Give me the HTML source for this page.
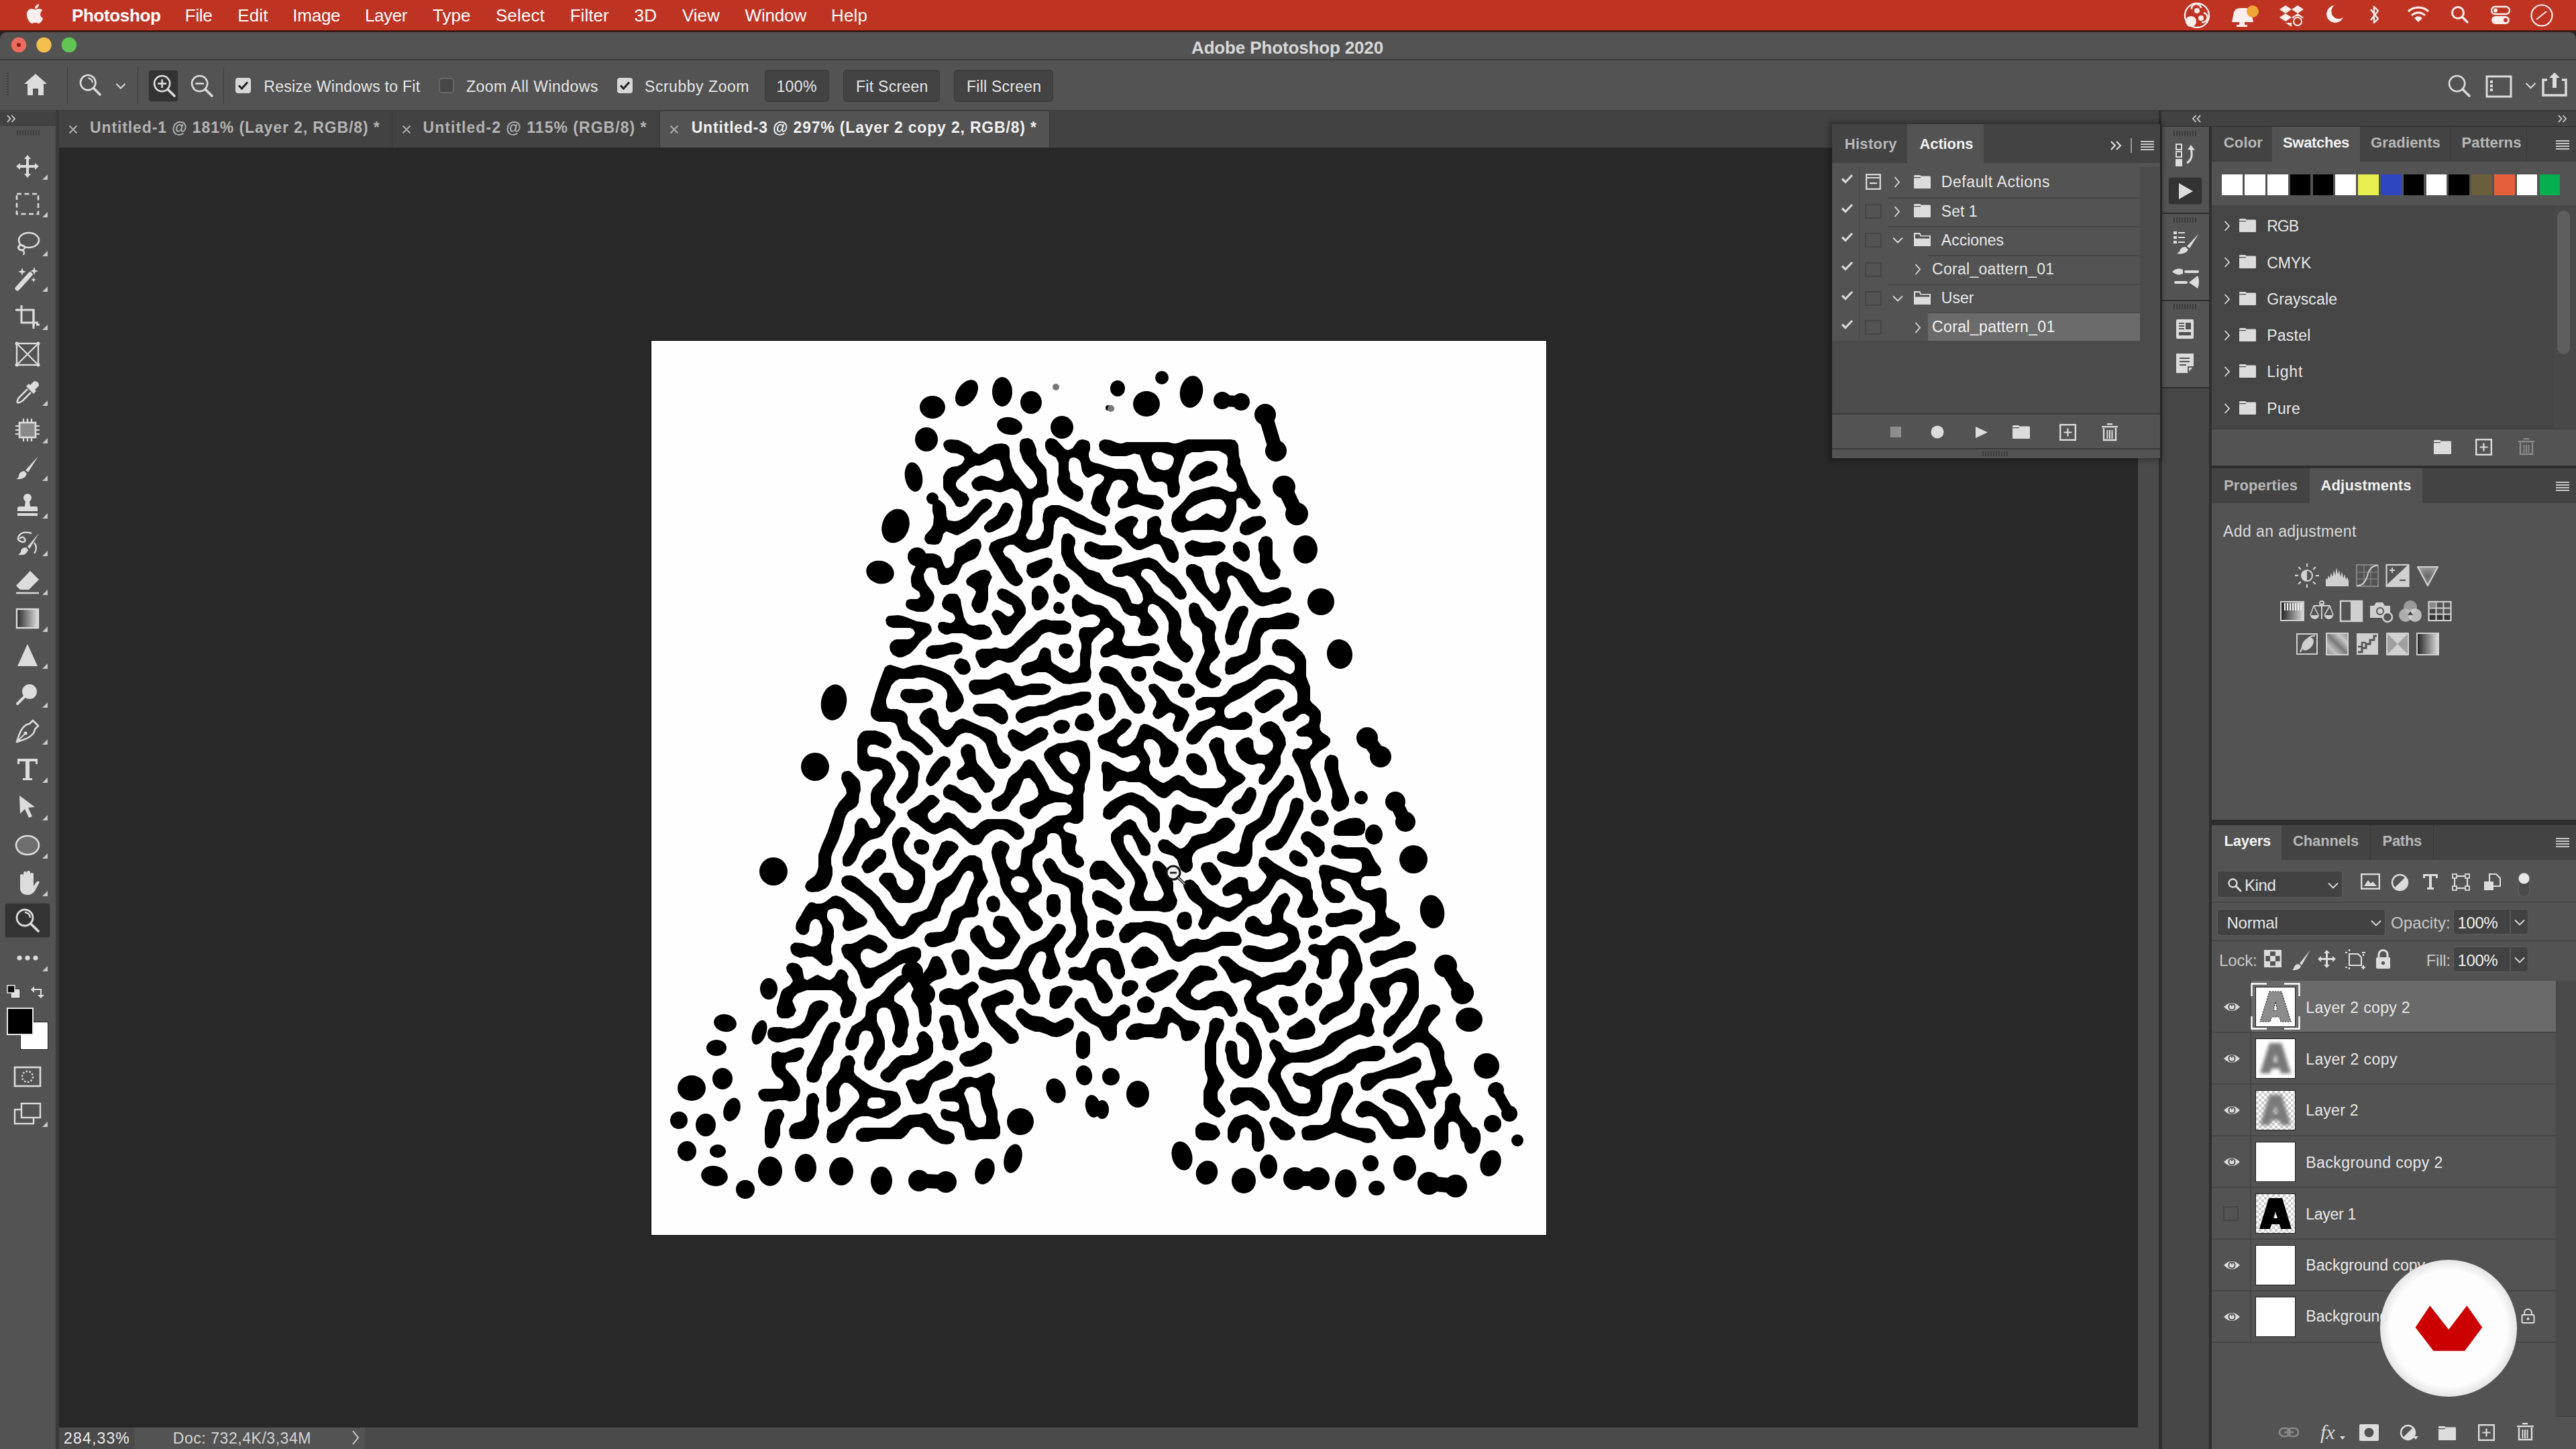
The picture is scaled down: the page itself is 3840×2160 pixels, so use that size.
<!DOCTYPE html><html><head><meta charset="utf-8"><style>*{margin:0;padding:0;box-sizing:border-box}
html,body{width:3840px;height:2160px;overflow:hidden;background:#282828;font-family:"Liberation Sans", sans-serif}
body>div,body>span,body>svg{position:absolute;display:block}
.t{white-space:nowrap}
</style></head><body><div style="left:0px;top:0px;width:3840px;height:46px;background:#bf3322;"></div><div style="left:0px;top:45px;width:3840px;height:3px;background:linear-gradient(#5a1a10,#2a1a18);"></div><div style="left:0px;top:48px;width:3840px;height:41px;background:#535353;border-radius:10px 10px 0 0"></div><div style="left:0px;top:88px;width:3840px;height:2px;background:#3a3a3a;"></div><div style="left:0px;top:90px;width:3840px;height:75px;background:#535353;"></div><div style="left:88px;top:165px;width:3134px;height:55px;background:#424242;"></div><div style="left:0px;top:164px;width:3840px;height:1px;background:#3a3a3a;"></div><div style="left:0px;top:165px;width:83px;height:1995px;background:#535353;"></div><div style="left:0px;top:166px;width:83px;height:22px;background:#424242;"></div><div style="left:83px;top:165px;width:5px;height:1995px;background:#3a3a3a;"></div><div style="left:88px;top:2128px;width:3099px;height:32px;background:#4a4a4a;"></div><div style="left:200px;top:2128px;width:344px;height:32px;background:#535353;"></div><div style="left:3187px;top:220px;width:31px;height:1940px;background:#4a4a4a;"></div><div style="left:3218px;top:165px;width:622px;height:1995px;background:#2e2e2e;"></div><div style="left:3222px;top:166px;width:618px;height:22px;background:#424242;"></div><div style="left:3223px;top:189px;width:70px;height:128px;background:#535353;"></div><div style="left:3223px;top:319px;width:70px;height:128px;background:#535353;"></div><div style="left:3223px;top:449px;width:70px;height:128px;background:#535353;"></div><div style="left:3223px;top:579px;width:70px;height:1581px;background:#464646;"></div><div style="left:3297px;top:189px;width:543px;height:505px;background:#535353;"></div><div style="left:3297px;top:189px;width:90px;height:52px;background:#434343;"></div><div style="left:3518px;top:189px;width:322px;height:52px;background:#434343;"></div><div style="left:3652px;top:189px;width:1px;height:52px;background:#393939;"></div><div style="left:3766px;top:189px;width:1px;height:52px;background:#393939;"></div><div style="left:3297px;top:306px;width:510px;height:388px;background:#454545;"></div><div style="left:3806px;top:306px;width:34px;height:334px;background:#484848;"></div><div style="left:3812px;top:314px;width:19px;height:214px;background:#5e5e5e;border-radius:10px"></div><div style="left:3297px;top:640px;width:543px;height:54px;background:#535353;"></div><div style="left:3297px;top:639px;width:543px;height:1px;background:#3d3d3d;"></div><div style="left:3297px;top:698px;width:543px;height:524px;background:#535353;"></div><div style="left:3297px;top:698px;width:146px;height:52px;background:#434343;"></div><div style="left:3611px;top:698px;width:229px;height:52px;background:#434343;"></div><div style="left:3297px;top:1230px;width:543px;height:930px;background:#535353;"></div><div style="left:3297px;top:1230px;width:0px;height:52px;background:#434343;"></div><div style="left:3401px;top:1230px;width:439px;height:52px;background:#434343;"></div><div style="left:3533px;top:1230px;width:1px;height:52px;background:#393939;"></div><div style="left:3627px;top:1230px;width:1px;height:52px;background:#393939;"></div><div style="left:3297px;top:1344px;width:543px;height:2px;background:#474747;"></div><div style="left:3297px;top:1401px;width:543px;height:2px;background:#474747;"></div><div style="left:3297px;top:1450px;width:543px;height:12px;background:#535353;"></div><div style="left:3810px;top:1462px;width:30px;height:650px;background:#4a4a4a;"></div><div style="left:3297px;top:2111px;width:543px;height:1px;background:#3f3f3f;"></div><div style="left:970px;top:507px;width:1336px;height:1335px;background:#000;"></div><div style="left:971px;top:508px;width:1334px;height:1333px;background:#fefefe;"></div><svg style="left:971px;top:508px" width="1334" height="1333" viewBox="0 0 1334 1333"><g fill="#000"><path fill-rule="evenodd" d="M548 365l-4 1-4-1-5-3-6-6-5-8-8-13-8-13-4-8-1-4 1-4 1-2 1-3 2-1 8-4 14-4 6-2 6-3 4-5 2-6 1-6 2-6 0-10 2-8 0-8-4-10-2-4-3-1-6-3-4 1-10 4-4 1-6-1-8-3-4 0-6 0-6 2-4 0-3-2-3-2-2-4-1-4 1-2 4-5 6-3 4-1 6 1 16 7 4 0 2-1 3-2 2-4 0-6-1-3-2-6-2-6-1-3-3-1-4-1-5 2-9 5-8 3-7 0-8 4-7 8-8 6-4 4-2 4 0 4 1 2 3 4 12 6 2 4 2 4-1 2-2 4-1 2-4 2-2 1-4 1-4-1-2-1-2-4-5-8-11-12-1-4 0-16 3-6 4-5 6-3 8-1 6-3 2-2 3-6-2-4-5-2-4-2-10-1-4-2-4-3-2-4-1-4 2-4 3-2 6-1 12 1 12 6 6 4 4 7 4 2 4 2 6-3 9-8 9-4 10-1 6 1 2 1 3 3 1 4 0 12 4 14 4 8 6 7 8 11 4 5 4 2 4-1 5-4 2-4 0-6-5-10-13-14-4-6-1-4-3-8 0-10 1-4 1-2 3-2 8-1 2 1 4 2 3 6 3 8 0 8 2 4 2 4 8 9 3 5 1 20 2 6 0 6-1 4-1 2-6 3-7 1-4 2-3 3-1 3-1 4 0 22-1 4-4 8-3 6-2 4 1 2 1 2 2 2 4 1 6 0 6-3 2-2 5-10 0-8-2-6 1-10 2-6 1-2 3-2 6-3 12 0 14 5 16 8 5 2 11 7 18 7 4 2 1 2 1 6-1 2-1 2-4 2-8-1-32-12-7-5-4-6-3-1-4-2-4-1-4 2-4 5-2 7-1 18-4 10-3 3-4 2-7 1-15 5-6 1-4-1-4-2-8-6-4-3-6 0-5 2-3 3-1 3-1 2 2 4 1 2 9 6 2 3 3 5 3 8 9 12 1 4-1 2-1 2-4 3zM680 261l-2 1-4-1-9-5-7-6-2-6-1-2 3-12 2-7 3-5 7-5 4-5 1-4-1-2-4-3-4-1-4 1-8 4-2 1-2 0-3-2-3-4-2-4-2-12-2-4-4-3-4-1-3 0-3 2-1 2-1 4 0 10 2 6 0 8 3 4 2 2 11 6 3 4 1 6-1 6-3 4-2 1-2 1-4-1-9-5-9-6-5-6-1-2-2-6-1-4 0-4 2-6 0-18-2-4-2-4-11-6-4-6-1-4 0-6 1-2 2-3 4-2 6 1 4 2 12 13 4 2 4-1 4-2 7-10 3-2 4-1 6 1 4 2 2 4 0 8-2 6 0 4 2 6 2 2 5 2 5 1 10 3 16 5 20 0 4 1 6 4 3 6 1 4-2 6 0 6 1 4 1 3 4 2 4 2 18 1 6 3 5 5 1 4-1 4-3 4-4 2-8-1-22-7-4 0-4 1-10 4-6 1-4-1-2-1-1-4 1-6 5-6 7-6 2-4 1-4-3-5-2-3-4-2-6-1-6 2-3 3-9 21 0 1 0 4 6 12-1 8-3 3zM852 285l-4 0-10-3-26 0-6 0-14 4-6-1-5-3-3-4-2-4-1-6 1-8 2-5 15-15 7-9 4-4 5-3 15-4 8-2 4-1 10 1 16 7 6 0 2-1 2-2 1-4-1-6-6-6-6-4-2-6-1-4 2-8 0-10-2-4-5-3-6-3-18 0-8 2-14 0-4 2-4 2-2 3-1 3-9 26 0 8 2 8-1 8-2 4-3 2-2 1-4 1-4-2-2-4-1-12-1-2-2-2-4-2-4 0-8 1-4-2-4-3-6-14-6-17-2-5-4-1-4-1-12 4-22 0-4-1-7-3-7-6 0-2-1-4 1-4 0-1 4-3 4-1 8 1 10 4 4 1 4 0 6-2 6 0 56 0 8 2 4 0 4-1 10-4 4-1 64 0 4 1 2 0 3 4 2 4 1 16 2 6 0 6 3 6 6 14 3 10 2 4 4 6 10 11 2 3 0 4-2 4-4 4-2 1-4 0-4-2-2-1-4-8-4-4-4-2-4 1-1 1-1 2 0 16-5 14-5 10-4 4-6 3zM770 192l5-4 3-6 1-6-2-4-3-2-4-1-10-3-8 0-4 2-1 2-1 2 0 6 2 4 2 4 4 4 5 2 5 1 6-1zM812 209l-4 1-2-1-3-3-1-2-1-2 1-2 2-5 10-10 10-5 4-1 8 1 6 4 2 4 0 4-1 2-3 4-6 3-6 1-4 2-12 5zM428 303l-6 1-10-1-3-3-2-4 1-6 9-10 3-6 1-12-2-8 0-8 1-4 2-3 2-1 4-1 2 1 4 3 3 3 2 4 1 14 1 2 1 3 3 1 7 1 6-1 4-2 8-5 7-7 5-7 9-9 3-2 6-1 2 1 4 2 2 4-1 4-1 2-6 6-6 4-4 4-6 8-10 10-8 5-8 4-2 1-4-1-10-4-2-1-2 1-3 3-2 8-2 4-3 3zM810 268l4-2 8-6 6-3 6 3 8 4 4 1 2-1 5-4 3-6 1-8-3-5-2-3-4-2-4 0-8 0-15 4-12 6-7 5-3 3-2 4-1 4 2 4 2 2 4 1 6-1zM508 285l-6 1-3-2-3-4 0-4 6-7 8-5 5-4 3-6 4-8 2-3 4-2 4 1 2 1 3 3 3 6-3 8-4 8-3 4-4 3-6 4-12 6zM780 331l-4 0-4-2-3-3-3-6-4-9-2-4-2-3-4-1-4 0-18 8-2 1-6 0-6-3-7-7-3-4-4-4-8-5-2-3-3-6 0-4 1-3 6-5 12-6 6-1 4 1 4 2 1 2 1 2-1 2-2 4-5 7 0 3 0 4 2 3 4 3 2 1 6 0 4-2 2-3 1-2 0-18 1-3 4-3 4-2 4-1 4 1 2 3 2 3 0 6-2 6 0 4 1 2 1 3 4 3 8 3 6 3 1 2 4 8 3 8 0 8-2 4-4 3zM892 289l-6 1-4-1-4-3-1-4 0-4 1-2 2-5 8-5 8-4 12-1 4 2 3 3 1 2 0 4-2 4-6 5-16 8zM800 479l-2 1-4-1-5-3-10-10-5-8-4-8-1-2 0-8 2-8 0-12-1-3-4-9-10-12-6-3-4-1-4 2-1 2-1 2 0 6 1 2 11 12 3 6 1 4-3 6-3 3-6 3-10 0-4-1-3-3-2-4 1-4 3-8 0-4-1-2-2-2-4-2-8 0-6-3-4-3-6-12-6-6-6-3-4-2-10-4-10-4-10-6-6-5-5-8-9-8-13-10-5-10-3-8 0-22 1-2 2-5 2-1 6-1 4 2 4 4 1 1 1 4 0 4-2 6 0 6 1 4 3 6 10 11 4 3 4 3 5 1 5 2 6 2 3 4 5 8 5 4 10 4 9 2 6 2 2 3 2 3 5 12 1 3 3 1 7 1 2-1 3-2 2-4-1-8-4-8-8-13-4-4-6-3-2 0-6 2-8 0-2-1-3-3-2-4 1-4 1-2 3-2 4-2 18-4 20-6 8-1 6 2 6 3 14 15 12 8 4 4 11 15 2 4 1 4-1 4-3 3-6 1-2-1-5-3-8-12-13-10-9-14-5-4-6-2-4 0-2 1-2 1-2 4 0 4 2 2 12 12 6 11 6 5 14 9 15 15 2 4 3 8 0 10-2 8 1 6 3 6 6 5 6 5 1 2 3 8-1 4-2 4-3 4-2 1zM932 355l-4 1-6 0-6-3-2-3-4-8-3-8 0-16-2-6 0-10 3-6 2-3 2-1 4-1 4 1 2 1 3 3 1 4 0 22 0 4 3 4 7 9 2 3-1 8-3 4-2 1zM410 403l-4 1-10 0-10-3-5-3-1-2-1-2 1-6 2-2 4-1 10 0 2-1 2-2 1-2-1-3-1-3-5-3-4-3-2-2 0-2-1-4 0-8 3-8 10-21 4-4 4-2 12 0 4 1 4 2 3 2 2 4 2 6 2 4 1 2 2 1 4-1 3-2 3-4 1-2 1-14 2-4 1-2 11-6 5-4 7-4 6-1 4 1 3 4 1 6-1 4-4 10-5 5-12 5-6 4-3 6-4 10-2 4-3 4-4 3-6 3-8 0-3-2-1-2-2-4-2-13-1-3-3-1-2-1-6 0-4 2-1 2-3 6 1 8 4 8 8 10 2 4 1 4-1 6-2 6-5 6-4 3zM822 321l-4 1-8 0-9-4-3-4-2-4-1-4 1-3 4-3 6-3 11 3 3 1 12 0 6-2 10 0 4 2 3 3 1 2-1 4-3 4-4 3-6 3-16 0-4 1zM686 325l-4 1-14 0-8-3-4-1-5-4-5-4-1-4 1-6 2-3 2-1 4-1 4 1 12 5 22 0 4 1 4 2 1 2 1 2-1 4-1 2-4 3-4 2-6 2zM886 329l-4 0-5-3-6-6-3-4-1-4 0-6 2-4 3-2 6-1 6 3 3 2 3 4 2 6 0 8-2 4-4 3zM576 353l-8 1-2-1-4-3-2-4-1-2 1-8 1-2 3-2 16-6 6-2 4-1 4 1 2 1 2 3-1 8-7 8-10 7-4 2zM848 403l-4 0-7-7-4-6-20-20-9-14-6-6-1-4 0-6 1-3 3-3 3-1 6 0 6 3 4 2 3 6 1 6 2 8 2 6 5 8 2 2 3 2 2 1 2-1 3-2 2-4 0-6-1-3-5-13 0-8 1-4 4-5 2-1 4-1 4 1 2 0 14 9 3 1 5 2 10 5 5 5 10 18 3 4 4 1 8 0 16-7 4-1 8 1 2 1 3 3 1 4-1 6-3 4-4 2-10 4-8 0-16 4-6-1-6-3-13-14-5-8-8-13-2-3-4-3-2-1-3 0-3 2-1 2-1 4 1 4 4 10 1 4-1 6-8 16-3 3-4 2zM492 405l-4 1-4-1-3-3-2-4-2-4 1-6 5-10 1-4-2-3-2-2-9-5-1-2-1-4 2-4 7-6 12-6 8-1 2 1 4 2 2 5 2 3-1 2-5 12 0 20-1 4-3 10-4 4-2 1zM614 377l-4 0-5-3-1-2-4-8-1-6 1-6 2-3 2-1 4-1 6 3 6 4 3 6 1 6-1 4-3 4-6 3zM580 401l-4 1-4-1-2-3-3-6 0-16 1-4 4-5 4-2 4 0 4 2 5 5 3 6 0 6-2 6-4 6-6 5zM530 439l-4 0-4-3-2-6-4-7-6-9-2-4-1-2 1-2 2-3 4-2 4 1 4 2 6 5 4 2 4-1 4-4 1-2-1-3-3-7-5-2-10-5-4-3-2-4-1-4 1-2 2-3 4-2 4 1 4 1 8 5 8 5 7 7 4 8 1 2 0 8-2 4-9 10-11 16-2 1-4 2zM498 445l-8 1-8-1-8-4-4-3-6-2-16 0-6 2-4 0-6-3-3-3-1-2-1-4 1-4 1-2 3-1 4 0 10 2 2-1 3-2 2-4-1-4-3-4-3-1-8-4-3-3-1-2-1-4 1-4 2-5 4-4 4-2 8 0 4 1 2 3 3 5 1 8 4 18 4 8 2 2 4 2 4 1 8-2 8 0 6 3 2 1 3 5 1 4-1 2-3 4-6 3zM628 511l-4 1-10-1-9-5-11-9-6-3-12 0-12 5-4 1-4-1-2-1-2-4-1-4 1-4 1-2 3-2 4-2 8-2 6-3 2-3 4-11 3-3 3-1 4 1 2 1 3 3 1 14 2 4 3 2 13 8 5 2 5 3 6-1 4-2 2-2 3-6 0-18 2-8 0-6-4-12 1-8 2-3 4-2 14 0 4-1 4-2 1-2 1-2 1-4-1-2-2-2-4-3-2-1-6 0-10 3-4 1-6-3-3-3-2-4-2-4 0-12 1-2 2-4 3-2 3 0 4 2 13 10 7 3 10 1 4 2 6 4 5 8 3 4 12 8 2 3 3 3 1 8-1 4-3 7 0 3 2 4 2 2 4 1 18 0 14-4 6 0 4 1 4 2 1 2 1 4-2 4-4 4-4 2-14 0-12 3-4 1-12-1-12-5-5 0-9 4-6 0-2-1-2-3-1-4 1-4 2-4 2-2 10-6 2-1 2-3 1-2 0-6-2-4-5-4-4 0-2 1-16 15-4 7 0 3 0 12-2 10 0 10 2 8-1 8-3 4-4 3-20 2zM610 407l-4 0-4-2-2-3-1-4 1-4 2-3 2-1 2-1 4 1 2 1 3 3 1 4-1 4-3 4-2 1zM840 517l-4 1-4-1-12-6-5-5-3-6-1-4 1-4 12-26 1-4-1-3-3-11 0-10-1-4-3-6-7-4-4-4-4-10-1-10 1-6 2-2 4-2 4 1 4 2 9 17 2 2 11 6 1 2 2 4 1 4-2 8 0 10 7 16 1 2-2 4-2 4-10 9-2 5 0 4 2 4 2 2 10 5 3 3 1 2-1 2-3 6-2 1-4 2zM868 453l-4 1-4-1-2-1-2-4-1-8 4-14 1-6 4-10 7-10 5-4 8-1 2 1 3 2 1 4-1 6-2 4-5 7-3 7-3 8 0 8-2 4-2 4-4 3zM868 497l-8 1-2-1-2-1 0-2-1-4 1-10 4-5 4-3 10-2 8-3 4-3 2-4 4-18 4-14 4-8 4-5 4-2 14 0 10-3 16-5 8 1 4 2 4 2 2 4-1 8-2 4-5 3-4 1-32 0-4 2-4 2-3 4-3 6 0 22-1 2-3 6-4 3-18 10-8 7-6 3zM376 471l-4 1-4 0-4-2-4-2-4-6-1-6 1-4 2-3 4-3 4-1 16 0 4-1 4-3 2-3 1-2-1-3-2-3-4-2-26 0-6-2-4-4 0-2-1-4 2-4 3-2 14-1 6 1 6 2 15 6 13 2 6 2 3 4 1 6-2 4-6 6-6 4-4 4-6 8-8 8-6 3-4 2zM500 487l-4 1-4-1-2-1-2-4-4-8-1-4 1-6 2-2 6-3 14 0 6-2 2 0 6 2 4 0 6 0 4-2 4-2 21-21 7-5 10-10 6-3 6-1 8 2 20 0 6 3 3 2 1 4-1 6-3 4-2 1-4 1-10 0-12-4-6 1-6 3-6 8-4 4-12 8-10 10-4 6-4 3-4 2-6 1-4-1-8-3-4 0-6 3-10 8zM992 687l-2 1-4-1-3-3-3-4-3-6-3-13-4-13-4-10-2-4-4-6-4-8-1-2 1-6 2-3 2-1 4-1 6 2 6 0 4-2 4-5 1-2 0-4-1-2-2-2-4-2-10 0-4-1-2-3-1-2 1-2 2-3 12-7 3-2 2-4 0-4-1-2-4-3-2-1-4 0-4 2-8 8-4 1-4 1-4-1-2-1-2-4-1-2 0-4 2-4 3-2 12-6 3-2 2-4 0-12-1-4-3-6-9-7-6-3-6 0-6-2-10 0-4 1-6 3-10 9-24 16-15 7-7 6-2 4 0 6 1 2 1 3 4 2 8-1 4-2 8-6 6-1 4 2 5 5 1 6-1 6-1 2-4 3-6 3-22 0-14-6-6 0-6 2-6 4-7 8-5 8-6 5-6 1-4-1-3-3-2-4 1-4 2-5 16-16 2-1 6-2 6-2 4-2 5-4 1-2 1-4-1-2-2-2-4-2-4 1-10 4-4 0-2-1-2-4-1-6 2-4 3-2 6-3 24 0 4-1 2-1 5-3 4-6 6-6 5-2 12-4 4-2 8-5 14-14 6-3 6-1 6 1 8 4 8 6 5 2 3 1 2-1 3-2 2-4 0-6-1-4-2-2-6-5-4-2-14-2-3-3-3-4-1-4 1-6 4-5 4-2 12 0 6 3 18 16 4 6 2 6 0 24 6 16 0 16 0 4 3 4 7 6 5 6 1 4 0 10-2 8 1 6 3 4 8 5 3 3 1 2 0 4-2 4-4 4-10 6-12 12-2 4 1 8 8 16 7 20 0 6-1 4-3 4-2 1zM430 473l-4 1-8 0-6-3-2-3-1-2 1-6 3-4 5-2 16-1 14-4 8 1 4 2 3 2 1 4-1 4-1 2-4 3-14 1-14 5zM622 473l-4 1-4-1-3-3-3-4-1-6 1-4 2-3 2-1 4-1 6 1 4 2 2 5 2 3-1 2-3 6-4 3zM470 497l-4 1-6-1-5-5-3-4-1-2 1-4 2-5 4-3 2-1 4 1 6 2 3 4 2 4 1 6-2 4-4 3zM786 507l-6 1-8-1-20-10-2-3-2-4 0-4 2-4 2-3 2-1 2-1 4 1 8 4 8 4 12 4 3 4 1 6-2 4-4 3zM416 617l-4 1-4-1-18-16-4-3-10-3-2-1-4-6-2-6-2-8-3-4-3-1-4-1-16 0-4-1-5-3-3-4-1-4 0-6 5-16 2-8 4-12 2-6 6-16 2-5 4-3 4-1 4 1 12 4 4 1 8-3 6-2 12-1 11 3 13 4 6 2 8 4 6 4 13 20 5 8 1 4 1 4-1 4-2 4-3 4-4 3-4 2-6 1-4-2-2-4-1-2 0-8 2-6 0-6-1-4-2-3-6-6-12-6-10-4-4-1-10 0-6 2-20 0-6 3-6 6-1 3-4 10-3 8 0 6 1 4 1 3 4 2 10 0 4 1 6 2 4 4 2 4 0 10 3 6 3 4 16 11 12 12 3 3 1 6-2 4-2 1zM730 555l-4 1-6-1-7-7-5-8-4-8-6-11-4-5-6-3-14-4-3-3-3-6-1-4 3-6 2-3 4-2 6 0 6 2 6 3 6 7 4 7 6 8 10 11 6 4 4 3 5 10 1 4-1 6-3 4-2 1zM732 507l-4 1-6-1-3-3-3-4-1-6 1-4 2-3 2-1 4-1 6 1 4 2 3 4 1 6-1 4-3 4-2 1zM544 535l-6 1-3-2-5-4-4-7-2-2-6-3-7 2-19 7-8 1-4-1-3-3-3-4-1-6 1-4 1-2 3-2 4-1 22 0 6-3 14-6 4-1 2 1 4 2 7 12 1 3 3 1 7 1 14-4 18 0 4 1 2 1 4 1 1 2 1 2-2 4-2 3-4 2-4 1-22 0-8 3-10 4zM786 583l-4 0-2-1-2-4-1-6 3-8 1-4-2-4-3-1-2-1-4 1-8 6-6 3-4-1-3-3-1-2-1-2 1-4 4-8 1-6-3-6-8-10-1-6 1-3 2-1 6-1 4 2 10 9 5 8 5 7 4 3 16 8 5 4 3 6-3 8-7 14-2 1-4 2zM804 531l-4 1-8 0-2-1-3-3-2-4 0-4 3-6 1-2 3-1 8 0 4 2 4 3 2 4 0 4-2 4-4 3zM410 539l-8 1-18 0-4-1-5-3-3-4-1-4 1-4 2-3 4-2 10 0 8 2 8-2 6 0 4 1 2 1 3 3 1 6-1 2-3 4-6 3zM914 555l-4 0-4-2-5-5-1-2-1-4 1-4 0-1 4-3 10-6 10-6 4-2 6-1 4 1 5 6 1 4-2 4-6 6-8 5-8 7-6 3zM556 569l-4 1-4-1-3-3-2-4 0-4 1-3 5-5 3-2 8-3 12 0 6-2 8-1 20-10 8-3 10-1 16-5 10 0 4 1 1 2 1 4-1 4-3 4-4 3-8 3-8 0-16 5-7 1-9 4-10 5-13 1-7 3-14 6zM682 565l-4 1-2-1-3-3-3-4-3-8 0-16 1-4 2-3 4-2 6 1 4 3 3 5 5 14 0 6-3 6-3 3-4 2zM526 571l-4 1-4-2-4-2-6-5-4-2-4-1-10 0-6-3-3-3-1-2-1-4 1-2 2-3 4-2 28 0 6 3 8 6 3 6 1 6-1 4-3 4-2 1zM528 637l-4 1-6 0-2-1-4-3-2-4-6-12-2-6-2-7-2-5-4-4-6-5-12-6-8-1-6 2-6 4-6 10-4 4-4 2-2 0-3-2-6-6-4-6-14-14-11-8-2-6-1-2 3-6 4-5 6-3 4-1 2 1 4 2 3 2 2 6 1 4 0 6 2 6 4 4 4 2 4 0 4-2 2-2 4-6 2-3 6-3 4-1 8 3 18 8 10 4 8 4 4 3 3 5 1 10 3 6 5 7 8 5 3 4 1 2-1 4-3 6-4 3zM654 581l-6 1-8-1-4-2-3-3-2-4 1-6 2-4 3-4 5-2 6-1 4 2 4 4 3 5 1 8-2 4-4 3zM844 695l-2 1-4-1-4-2-6-5-8-3-8-3-6-1-6-2-12-8-2-1-4 0-4 2-6 6-4 3-4 1-4-1-6-3-16-15-10-5-16 0-6-2-8 0-2 1-2 1-5 8-3 4-4 2-6-1-2-1-1-4 0-20-2-6 0-8 1-2 1-2 3-1 6 1 11 8 8 4 6 2 3 1 8-2 4-2 4-5 3-6-3-6-2-2-2-2-6 0-8 3-6 1-6-3-4-3-8-3-6-2-6-2-4-3-2-6-1-4 1-4 1-2 3-2 12-5 6-4 4-5 3-4 6-6 3-1 6 1 4 2 1 2 1 2-1 4-9 10-6 4-4 4-1 2-1 2 1 4 3 4 4 1 6-1 6-3 8-9 4-10 2-6 1-2 3-2 2-1 6 1 12 6 8 5 10 10 12 8 3 5 1 2-1 8-7 14-6 5-8 1-2-1-3-3-2-4 0-4 2-6 0-8-1-4-2-4-6-6-4-2-6 0-2 1-2 1-2 4 0 6 1 2 6 10 2 4 1 6-2 6 0 6 2 6 4 5 10 6 4 2 2 0 6-3 8-6 4-2 4-1 2 1 6 2 10 11 7 3 7 3 24 0 6-1 4-2 2-2 3-6-3-6-7-6-3-4-2-8-2-8-4-8-4-8-1-6 3-6 2-2 6-3 6 1 2 1 3 3 1 4 0 14 3 8 3 8 8 9 12 6 4 4 2 3-2 4-4 4-12 7-10 9-2 3-6 11-6 5zM616 585l-4 1-6-1-4-3-2-4-1-4 1-2 2-3 4-3 6-1 6 1 2 1 3 3 1 4-1 4-3 4-4 3zM916 661l-4 1-4-1-2-1-1-4 1-6 8-10 1-4-1-4-2-1-2-1-6 0-6 2-4 0-4-1-4-2-7-5-3-4-4-8-1-8 2-4 7-6 4-2 6-1 4 2 3 3 1 12 1 2 3 5 4 2 4 0 6 0 4-2 5-5 1-2 1-4-1-5-2-3-4-3-8-4-3-3-2-4 0-4 2-4 5-4 4-2 6-1 6 3 5 4 3 6 3 4 4 8 1 10-1 2-7 15 0 11-3 6-11 18-8 7zM556 611l-4 1-4-1-5-3-5-4-4-8-3-6 1-6 2-3 4-2 4 1 4 2 7 4 5 3 6-3 10-8 6-2 2 0 4 2 4 2 1 2 1 4-2 4-2 4-32 17zM296 783l-6 1-2-1-2-1-1-4 0-8 3-6 10-16 4-8 1-4 0-14 3-6 2-3 2-1 4-1 2 1 2 1 3 3 4 8 1 2 4 1 4-1 2-1 4-5 1-2 0-6-1-2-8-10-4-8-1-4 0-12 1-4 2-5 14-15 1-4-1-5-1-3-3-1-4-1-4 1-8 3-8-1-4-2-2-3-2-4-1-4 0-34 3-6 3-4 3-2 4-1 14 0 10 3 6 3 7 7 1 4-1 4-3 4-2 1-4 1-2-1-12-5-7 0-3 2-1 2-1 2 0 6 2 4 3 2 13 1 8 3 4 2 5 4 6 12 1 4-1 6-2 4-10 16-3 4-2 6 0 4 1 4 1 3 3 1 9 6 2 1 2 3 0 4-3 6-8 10-6 10-3 4-6 3-11 3-4 2-9 8-2 3-3 7-4 10-5 6-4 3zM574 879l-4 1-4-1-5-5-4-6-3-8-4-8-13-14-4-6-7-8-4-8-2-6-1-10-3-7-8-23-1-8 1-6 2-4 2-3 6-3 2-1 4 1 6 3 3 3 1 4-6 14 1 8 3 6 4 4 4 1 4-1 4-4 2-4 2-20 3-4 11-6 2-2 3-6 1-10 2-5 2-1 10-6 6-4 7-6 5-2 14-1 2-1 4-3 2-3 1-2-1-3-1-3-3-1-4-3-4 0-12 0-10 3-8 4-3 3-4 6-3 4-4 3-4 2-4 0-8-4-3-3-2-4 0-6 1-3 4-3 6-2 6-2 4-2 5-4 2-4-1-7-4-9-6-6-2-2-4 0-4 1-1 1-2 4-2 6-4 10-9 10-6 10-6 5-4 2-4 1-4-1-4-2-2-3-1-8 1-2 1-2 11-6 5-4 3-6 2-8 2-6 1-2 5-5 6-4 5-5 5-8 2-3 6-3 2 0 4 2 3 2 6 10 8 12 4 8 3 6 2 5 4 2 19 5 3 1 4-1 3-2 1-2 1-4-1-4-4-4-8-3-5-3-8-8-7-10-8-10-2-4-1-6 2-4 5-5 14-7 14-1 16-4 6 1 4 2 3 2 4 10 1 4 0 24-8 23 0 9-2 6 0 36-2 4-4 3-2 1-6 0-6-2-4 0-2 1-3 3-1 4 2 4 2 2 12 4 3 2 1 8-2 8 0 6 1 2 1 3 8 5 1 2 2 4 0 4-1 2-4 3-4 1-4-1-10-5-4-6-6-10-1-20-3-6-2-2-4-2-6 0-2 1-2 1-2 4 0 10-3 6-3 3-9 5-3 2-2 3-2 5 0 12 1 4 4 8 6 8 3 6 0 8-2 4-4 3-10 6-2 1-2 4 1 4 3 6 12 9 3 3 2 4 1 4-3 6-3 3-4 2zM504 673l-6 1-2-1-3-3-3-4-6-11-4-4-2-1-3 0-11 5-2 0-4-1-2-4-1-4 1-4 1-2 8-6 2-4-1-4-4-8-1-6 1-4 0-1 6-5 4-1 4 1 4 3 3 5 1 14 2 6 22 23 3 3 1 4-1 4-3 6-4 3zM376 689l-4 1-4-2-2-4-1-4 1-4 2-4 10-12 5-10 0-8-3-5-4-5-8-6-2-4-1-2 1-4 1-2 3-2 4-1 6 1 8 5 9 9 2 4 1 4 0 4-2 6-1 20-5 10-12 12-4 3zM634 644l2-4 3-8-1-3-2-7-3-4-5-3-6-2-4-1-6 3-2 1-2 4 1 4 2 4 5 6 4 6 4 4 4 2 2 0 4-2zM824 647l-4 1-6-1-6-3-7-8-3-6-1-4 1-6 2-3 4-2 6 0 4 1 8 6 4 6 2 6 0 8-2 4-2 1zM1028 701l-4 1-6-3-2-3-2-4-1-6 2-6 0-10-5-13-4-11-3-8 1-12 3-6 3-2 2-1 6 1 2 1 3 3 1 4 0 12 2 10 7 18 6 14 1 2 0 6-1 4-5 6-6 3zM420 663l-4 1-2-1-3-3-2-4 1-6 6-12 4-6 8-9 4-3 4-1 4 1 2 1 3 3 1 4-1 6-9 10-8 12-8 7zM250 821l-10 1-6-1-3-3-1-2-1-2 1-4 2-4 11-8 3-4 2-6 1-4 0-18 5-14 8-18 4-12 6-18 1-4 7-12 9-10 2-4-1-6-4-7-2-5-1-4 1-6 1-2 3-2 6-1 4 2 8 8 3 3 2 4 1 12-2 6-1 12-3 6-4 3-8 5-4 6-2 5-3 13-6 18-9 19-2 7 0 10 2 6 0 10-1 4-2 6-3 6-4 4-10 5zM886 783l-4 1-14 0-16-5-4-2-4-3-1-4 1-4 2-3 4-2 8 0 10 4 4-1 3-2 2-4 0-6 2-6 1-6 4-12 2-4 2-2 14-8 5-4 3-6 8-22 2-5 15-15 7-10 2-3 4-2 4 1 4 2 2 4 0 6-1 4-5 6-8 6-8 9-4 10-3 13-5 10-8 8-12 8-4 5-4 9 0 18-1 4-3 8-6 5zM486 703l-4 1-10-1-16-14-4-3-6-1-8-4-2-3-1-2 0-6 2-4 5-4 2-1 4 1 6 2 7 6 7 4 6 2 6 2 8 9 3 3 1 4-1 4-2 2-3 3zM884 705l-6 1-6-1-6-5-1-4 1-2 2-4 1-2 10-6 1-2 6-10 2-3 4-2 4 1 2 1 3 3 1 6-1 6-9 18-4 3-4 2zM752 733l-4 0-4-3-2-2-2-6-1-10-3-6-10-9-8-4-6-1-5 2-9 8-6 8-4 2-4 2-6-1-4-3-1-4 1-8 2-3 8-8 8-5 12-6 6-2 6-1 4 1 14 6 6 6 10 7 5 5 3 6 0 22-2 4-4 3zM488 751l-8 1-6-3-20-19-4-2-4-2-4 1-16 8-4 1-4-1-8-4-12-10-12-7-4-6-1-4 1-2 1-2 3-2 12-6 15-14 3-1 4 0 2 1 4 3 3 3 1 2-1 2-1 2-6 6-6 4-4 5 0 3 1 4 3 4 2 2 4 1 6-3 2-2 4-6 2-3 4-2 4 0 2 1 6 2 18 19 3 1 3 2 2 0 4-2 10-9 6-3 4-1 28 0 4 1 10 4 8 6 3 4 1 6-1 4-3 4-2 1-4 1-4-1-1-1-11-10-6-3-8-1-7 2-5 3-6 5-6 10-4 3zM934 759l-10 1-4-1-1-1-3-4-1-4 1-4 1-2 3-2 12-6 4-4 12-24 3-8 1-8 2-6 2-3 2-1 4-1 4 1 4 2 2 4 0 10-3 8-22 42-7 8-6 3zM786 735l-6 1-3-2-3-4-3-6 4-12 1-14 4-5 4-2 4 1 4 2 6 4 4 2 4 1 14 0 2 1 4 2 2 4-1 4-5 6-2 1-4 1-6 0-8-2-4 0-2 1-2 3-5 10-3 3zM1002 723l-6 1-6-1-4-3-2-4-1-4 1-6 3-4 3-2 4-1 6 1 4 2 3 4 3 6-1 4-2 4-5 3zM798 793l-2 0-4-2-3-3-1-2-2-5-2-7-4-4-2-2-14-4-4-2-3-4-1-2-1-4 1-4 1-2 3-2 2-1 8 1 13 10 5 3 4-1 2-1 5-5 5-8 2-3 8-3 12-2 6-3 6-7 5-8 3-2 4-2 4-1 6 0 4 2 4 4 2 3 0 4-2 4-10 10-10 7-8 4-5 1-13 5-7 3-3 2-4 5-2 5 0 6 1 4 0 4-2 4-1 2-6 3zM1058 737l-6 1-28 0-4-1-2-1-1-4 1-8 2-3 4-3 4-2 12-4 10-1 6 1 6 5 1 1 1 4 0 6-1 4-1 2-4 3zM772 851l-8 1-8-2-34 0-4-2-4-6-1-4 0-8 1-2 6-14 1-6-1-5-6-11-9-10-9-14-10-20-1-4 0-8 2-4 5-5 6-4 6-6 6-3 4-1 2 1 6 4 2 5 5 9 11 13 3 5 1 2 0 10-2 4-2 1-2 1-6-1-2-1-2-4-2-4-4-10-4-7-1-3-3-1-4-1-4 1-2 2 0 3 0 6 4 10 5 6 5 6 4 6 7 8 7 10 3 10 1 4-1 4-5 12 0 4 1 2 1 3 4 2 14 0 6-3 3-4 1-4-2-5-2-5-9-16-1-4-3-8 0-6 1-2 1-2 3-1 6 1 4 3 5 5 8 16 3 8 0 12 6 14-1 6-2 4-3 4-6 3zM390 837l-4 1-16 0-4-1-1-1-5-4-5-10-14-14-2-4 1-4 5-6 3-1 8 0 4 1 2 3 3 5 1 6 2 4 6 6 6 1 4-1 4-4 2-4 1-8-3-6-6-5-10-6-4-5-4-10-5-18 0-10 2-6 3-4 2-3 4-3 2-1 4 0 4 1 4 4 1 2 1 2-1 2-2 4-5 7-2 5 0 6 2 6 10 10 12 7 6 5 2 4 0 18-5 14-5 10-4 3-4 2zM996 769l-4 1-4-2-2-4-5-8-5-3-4-3-2-4-2-4 0-2 2-5 4-3 4-1 4 1 14 9 7 7 1 8-1 6-3 4-4 3zM408 765l-4 1-6-1-2-1-2-4-2-4-1-6 2-4 3-2 4-1 6 1 4 2 2 2 2 4 0 6-2 4-4 3zM430 789l-4 1-2-1-3-3-2-4 1-8 7-12 5-12 1-2 5-2 2-1 8 1 4 2 4 3 2 3-1 4-5 6-4 3-4 3-8 14-6 5zM1070 897l-6 1-3-2-5-6-1-4 2-4 3-2 4-2 10-4 4-4 1-4 0-16-3-5-2-3-4-4-12-4-6-4-4-6-4-8-3-6-5-4-10-4-6 0-4 1-2 1-1 2-1 2 2 6 2 2 8 4 4 2 4 3 2 3 0 2-1 2-3 4-4 2-10 0-4-1-7-7-3-6-3-10 0-8-3-10-1-4 1-8 2-2 4-1 8 1 7 2 11 4 16 5 6 0 4-1 3-2 2-4 0-6-1-3-2-2-4-2-4-1-22 0-4-2-4-2-4-4-1-4 1-4 1-2 3-2 8-1 12 4 24 0 4 1 2 1 3 3 4 8 4 8 8 10 1 6-2 4-2 1-4 1-16 0-4 2-1 2-1 2 0 8 4 5 4 2 6 0 10-3 4-1 4 1 4 2 1 2 1 4 0 18-2 8 1 4 1 4 2 2 12 6 4 2 2 4 0 4-2 4-6 5-8 3-13 0-17 9zM326 793l-4 1-4-1-2-3-2-4-1-2 3-6 2-3 8-6 5-7 3-3 4-2 6 1 4 2 2 4 0 6-3 6-3 4-6 4-6 6-6 3zM974 783l-4 1-8-1-5-3-4-4-2-4 0-6 1-2 2-3 4-2 4 1 6 3 8 7 2 4 0 4-2 4-2 1zM426 903l-4 1-4 0-4-1-2-1-4-6-1-4 1-4 3-4 5-2 16-1 4-2 4-5 2-4 4-14 2-5 4-3 8-4 4-2 2-2 2-4 2-6 4-12 7-16-1-7-1-3-3-1-2-1-3 0-5 4-2 3-12 23-6 6-8 6-1 2-5 10-1 6-4 8-1 2-10 5-7 1-4 2-7 6-4 6-4 4-10 6-6 2-10-1-4-2-3-3-8-12-13-14-5-12-5-6-10-9-12-9-14-7-5-5-1-2-1-4 1-4 0-1 4-3 4-1 6 0 6 2 6 4 10 10 6 4 14 13 5 8 4 6 10 12 7 12 4 4 4 1 4-2 2-3 4-8 4-5 2-1 6-2 8-2 4-2 3-2 1-2 6-12 6-18 2-5 4-3 14-8 3-2 9-12 6-9 4-4 4-2 4-2 8 0 6 3 3 2 2 4 1 12 3 6 4 10 1 2-3 6-8 10-5 9 0 7 2 8-1 8-1 2-4 3-13 1-4 2-2 2-2 4-3 7-1 9-4 8-1 2-6 3-7 1-13 5zM826 877l-4 1-2-1-3-3-2-4 1-4 5-12 0-6-1-2-4-4-9-6-6-6-7-14-1-4 1-4 2-3 2-1 6-1 4 2 7 7 7 12 8 8 7 4 11 7 5 1 3 1 6 0 10-4 6-4 2-3 1-2-1-3-1-3-3-1-2-1-4 0-8 3-4 1-4-1-2-3-1-6 1-3 5-5 9-6 8-4 2-1 8 1 2 1 3 3 1 12 1 2 1 2 2 1 4 0 6-3 6-6 4-6 3-6-1-4-9-10-2-4 1-8 2-3 2-1 4-1 4 1 10 8 17 10 15 8 8 3 6 1 4 2 3 2 2 4 1 8 2 4 0 12 7 12 1 4-1 4-1 2-4 3-4 2-4 1-10 0-2-1-3-3-2-4 0-4 3-6 2-4 2-4 1-6-2-4-3-4-11-8-9-7-4-2-4-1-2 1-4 3-7 12-5 8-12 11-4 2-8 2-7 3-19 18-6 3-2 1-4-1-14-7-4 1-3 3-7 12-4 3zM630 919l-4 1-4-1-3-3-2-4 1-6 12-14 3-6 0-14-8-22 0-26-1-3-2-5-4-3-6-3-12-3-4-2-2-3-7-10-3-8-1-2 3-6 2-3 2-1 4-1 4 2 3 3 6 10 5 6 9 4 11 4 4 2 4 3 3 3 1 10-2 8 0 12 3 8 4 10 1 2 0 20 2 6 0 4-1 2-4 8-8 12-5 6-4 3zM700 817l-4 1-3-2-13-12-2-2-8 0-8 2-4-1-2-1-2-4-1-8 1-4 3-6 4-4 3-1 10 0 4 2 22 22 3 3 2 4 1 4-2 4-4 3zM842 811l-6 1-3-2-4-4-5-8-4-8-1-4 1-4 2-3 2-1 8-1 4 1 6 6 5 8 3 6-1 4-3 6-4 3zM558 822l2-2 3-6 0-4-3-6-4-3-4-2-6-1-4 1-4 3-2 4 0 4 3 6 3 4 5 2 5 1 6-1zM696 855l-2 1-4-1-12-7-4-2-6-1-6-3-2-4-3-6 0-6 2-4 3-2 2-1 6 1 4 2 7 4 7 4 6 3 5 5 3 6-1 6-3 4-2 1zM930 925l-4 1-20 0-4-1-6-2-8-4-5-5-2-4 1-4 1-2 3-2 4-1 10 1 16 5 8 0 10-3 10-4 4-4 1-2 0-4-3-5-4-2-6-1-4 1-10 4-2 1-8 0-6-2-6-1-10-4-3-3-2-4 0-6 3-6 1-2 5-2 4-1 4 2 4 3 4 6 2 2 6 1 4-1 2-2 1-2 0-10-2-6 2-6 10-16 3-2 4-2 2-1 4 1 2 3 2 3 0 4-1 4-2 4-4 6-2 4-1 4 0 6 2 2 2 2 12 6 4 3 3 7 1 8 2 6-3 8-5 6-20 12-4 1-6 2zM602 859l-4 0-5-3-1-2-3-6 0-14 1-4 2-3 4-2 6 0 4 1 1 2 3 6 0 14-1 4-3 4-4 3zM266 931l-4 1-6-1-10-9-6-4-8 0-10 2-8-3-4-3-2-4-1-6 2-4 3-2 2-1 12 1 10 4 4 1 6-1 5-4 2-4 0-4 2-6 0-8-1-4-4-8-2-1-2-1-3 0-3 2-2 2-2 5-1 9-3 4-4 2-6-1-5-5-2-4 1-8 2-4 4-6 8-14 5-6 3-1 2 0 6 2 6 0 4-1 4-2 10-8 6-1 6 2 6 3 16 17 12 8 5 5 1 4-2 4-4 3-18 6-4 1-4-1-3-3-2-4 0-4 2-6 0-4-1-4-2-4-2-2-4-1-4-1-6 1-3 1-2 2-1 4 0 6 2 4 5 6 2 4 1 4 0 12-4 11 0 3 0 8 2 6 0 8-2 4-2 1zM514 851l-4 1-4-1-4-3-2-6-1-4 1-4 2-4 4-2 4-1 2 1 4 2 3 4 1 6-1 6-1 2-4 3zM1024 873l-4 1-8 0-2-1-3-3-2-4 0-6 1-2 2-3 4-2 14 0 8-3 6-2 4-1 8 1 4 2 3 2 1 4-1 6-1 2-4 3-6 3-14 0-10 3zM800 877l-4 1-6-1-4-3-2-6-1-4 1-4 2-5 4-3 6-1 4 1 3 2 2 4 1 8-1 6-3 4-2 1zM526 921l-4 1-16 0-4-2-4-2-20-22-2-4-1-4 0-6 2-4 7-6 4-1 2 1 4 2 2 4 4 14 5 8 2 2 4 2 3 1 6-1 3-2 3-4 1-2 0-6-1-2-2-2-8-6-6-6-1-4 1-6 2-5 2-1 2-1 10 1 6 2 1 2 8 14 8 10 1 4-3 6-4 6-9 14-4 3-4 2zM680 889l-6 1-4-1-3-3-3-4-1-4 0-8 2-4 3-2 6-1 6 1 6 2 2 5 2 3-1 6-2 4-1 2-6 3zM790 925l-4 1-4-1-4-2-3-3-3-4-10-20-6-6-6-4-12-4-6 0-6 3-14 12-8 1-4-2-2-4-1-8 3-6 7-8 5-2 2-1 16 0 6-2 8 0 8 2 8 1 8 3 4 4 3 5 2 6 1 6 2 4 2 5 4 2 4 0 2-1 9-8 5-2 8-1 6 2 6 0 6-2 12-8 6-2 16 0 4 1 6 2 1 2 2 4 1 4-1 4-3 3-4 1-22 0-8 3-14 6-17 1-8 4-7 6-6 3zM572 989l-4 1-4-1-4-2-2-3-3-6 0-10-1-4-3-6-5-4-6-2-10 0-22 6-6-1-7-3-5-2-2-6-1-2 1-6 2-3 4-2 6 1 10 4 4 1 8-2 16 0 6-3 4-4 6-16 2-4 7-8 3-2 16-7 6-4 6-7 5-8 4-4 3-1 6 1 2 1 3 3 1 4-1 4-3 6-11 12-3 6 1 6 2 6 4 10 3 8-1 4-3 6-4 3-6 3-8-1-4-3-1-4 0-6 3-8 2-6 1-6-1-3-1-3-3-1-2-1-4 1-4 3-11 20-1 4 1 4 3 8 6 8 7 16 1 2-1 6-3 4-4 3zM990 891l-4 1-2-1-2-1-2-4-1-4 1-6 2-3 2-1 4-1 6 1 4 2 1 2 1 4-1 4-3 4-6 3zM326 965l-6 1-2-1-3-3-3-6-2-9-4-9-8-10-4-4-6-4-2-4-2-4-1-6 1-2 2-3 4-2 8 0 8-3 12-8 6-3 6 1 6 2 8 5 6 5 2 4-1 4-1 2-4 3-4 2-4 0-12-6-4-1-4 1-2 1-3 4-1 2 0 6 2 6 6 7 3 1 3 1 6-1 16-8 8-5 9-9 9-4 12-4 4-1 6 1 4 2 2 4 0 8-2 4-4 4-4 2-16 0-5 2-17 11-16 10-3 3-5 8-4 3zM1006 1019l-4 1-2-1-3-3-2-4 1-8 3-6 8-8 9-4 8-2 3-2 3-4 1-2 0-4-5-14-1-4 1-2 4-8 6-8 2-4 1-4 0-12-3-6-2-2-4-1-6-1-4 2-4 5-2 5 0 24-1 4-3 4-2 1-8 1-2-1-4-3-2-4-1-2 1-6 3-8 0-6-4-4-7-3-3-3-1-2-1-4 2-4 3-2 6-1 6 2 8 0 4-2 8-8 4-2 4-2 8 0 4 2 4 2 9 9 6 12 2 6 1 6 2 6 0 8-3 6-6 8-3 5 0 3 0 24-3 6-5 6-4 4-18 9-12 10zM1084 933l-4 1-4-2-2-2-2-4-1-6 1-4 1-2 3-2 6-3 12 0 8-3 8-4 6-4 6-3 8 0 4 1 2 1 3 3 1 6-1 4-3 4-2 1-8 4-10 1-15 4-9 5-8 4zM736 935l-6 1-8-1-2-1-2-4-3-6 1-4 3-6 9-9 4-2 6 0 4 2 12 11 2 4-1 6-3 4-4 2-4 0-8 3zM680 987l-4 1-4-1-5-5-1-2-2-6-4-12-2-4-4-3-6-3-2 0-6 2-10-1-4-2-2-1-2-6-1-2 1-4 1-2 3-2 6-1 8 2 4-1 2-1 2-3 2-4 4-10 2-5 6-4 6-2 16 0 6 2 6 3 1 2 2 4 7 22 0 6-2 4-4 3-2 1-4-1-4-2-2-3-3-6-1-11-4-5-4-2-4 0-4 2-3 4-1 4 0 6 2 6 12 12 7 10 2 4 1 6-1 4-3 4-4 3zM468 945l-6 1-2-1-3-3-3-6-4-9-2-7-1-4 1-2 2-3 4-3 6-1 6 1 4 3 3 5 1 4 0 18-2 4-4 3zM410 1023l-4 0-4-3-2-4-2-19-2-5-6-8-2-4-1-4 2-6 11-20 12-16 4-10 2-4 2-2 6-1 4 2 4 5 6 14 0 6-1 2-3 3-4 2-8 2-4 2-8 7-2 3-2 6 0 3 9 18 1 8-1 14-3 6-4 3zM930 1031l-8 1-4-2-2-4-4-10-3-6-5-2-10-5-6-5-2-6-2-6-1-6 3-6 8-10 1-4-1-4-2-2-6-2-4 1-10 4-2 1-4-1-2-1-2-4-6-12-10-12-1-4 1-2 3-4 3-1 8 1 17 14 4 2 11 5 4 1 5 4 9 5 4-1 10-4 6-2 16-1 2-1 5-4 5-9 4-3 4-1 4 1 4 3 1 1 1 4 0 4-1 4-5 8-6 8-4 3-4 2-4 1-4 0-6-2-9 0-13 7-9 3-4 2-4 4-1 2 0 4 2 4 3 2 9 4 4 3 7 9 3 6 3 4 2 4 1 6-2 4-4 3zM292 1009l-4 1-2-1-2-1-2-4-1-8 4-12-3-6-8-7-6-3-4 0-32 0-14 5-5 5-3 6 1 2 4 10 1 2-1 2-3 6-2 1-6 3-10 0-4-2-2-4-1-2 0-8 3-10 2-8 2-6 3-4 9-5 4-5 1-2-3-6-6-8-1-6 2-4 3-2 4-1 6 1 4 2 5 6 2 12 1 3 2 1 2 1 6-3 7-4 3-1 6 3 8 4 4 1 2-1 5-4 3-6 3-4 3-1 2 0 4 2 3 3 3 6-2 8 1 6 3 6 6 4 1 2 3 6-1 8-4 12-2 4-1 2-6 3zM868 1007l-4 1-4-2-2-4-5-8-3-1-2-1-6 0-3 0-13 6-16 0-4-1-8-4-10-7-6-8 0-4 3-6 9-10 4-6 6-11 6-6 4-2 4-2 12 1 8 4 2 1 3 5 1 4-1 2-1 2-4 3-13 1-13 7-7 7-1 4 1 4 4 4 4 2 3 1 10-5 7-6 5-2 12-1 4 1 2 1 4 2 4 4 9 17 1 4-1 4-3 4-2 1zM1102 1037l-4 1-2-1-4-3-1-4 1-10 2-4 2-3 6-6 6-4 4-5 6-10 2-4 6-12 1-6-1-5-1-3-3-1-4-1-7 0-4 2-3 2-3 4-1 2 0 8 2 6-1 8-3 4-2 1-4 1-3-2-4-4-7-11-4-7-3-6 1-8 3-4 5-2 14-2 8-4 8-5 10-3 6-1 4 1 4 2 4 2 3 4 2 4 1 8 0 22-1 4-2 4-13 20-10 10-6 9-4 7-6 5zM754 971l-4 1-4-1-6-5-2-4-1-2 1-4 1-2 5-4 10-4 16-8 8-1 4 2 3 3 1 2-2 4-2 4-8 7-12 9-8 3zM328 1087l-4 1-4-2-2-4-1-4 1-10 4-8 6-8 3-6 0-6-1-3-3-7-3-1-4-1-4 1-2 1-4 7-1 11-3 6-4 3-6 1-2-1-3-3-2-4 1-10 9-18 3-2 10-6 6-6 1-2 1-14 3-6 3-2 8-4 6-3 7-7 5-7 15-15 5-2 2-1 6 1 2 1 2 3-1 6-7 8-8 6-4 4-2 3 0 3 0 4 2 2 3 2 7 4 3 4 2 4 4 12 1 8-2 6 0 10-3 8-3 6-4 3-2 1-4-1-5-5-2-4 0-4 4-12 0-8-1-3-4-13-2-6-4-3-2-1-6 0-4 2-2 3-2 5 0 10 2 6 5 8 4 12 1 4 0 12-3 6-4 6-3 4-3 8-3 4-4 3zM712 977l-4 1-2-1-4-3-1-4 1-8 2-5 4-3 6-1 6 1 2 1 3 3 1 4-1 4-7 8-6 3zM482 1039l-4 1-4-1-2-1-2-4-3-6 0-12-3-9-2-7-3-6-5-3-2-1-12 0-4-1-6-5-1-4 0-6 2-4 3-2 4-2 4-1 4 0 6 2 6 0 4-2 6-5 8-4 2-1 4 1 4 3 2 3 0 2-2 4-2 3-10 7-2 3 0 3 1 6 13 26 2 6 0 8-1 4-3 4-2 1zM986 991l-4 1-2-1-3-3-2-4 0-6 0-10 3-6 2-3 2-1 4-1 4 1 6 3 3 3 1 6-1 6-2 4-7 8-4 3zM608 995l-6 1-4-1-4-3 0-2-1-4 1-14 2-4 1-2 9-4 10-1 6 1 4 2 1 2 1 2-1 4-6 8-7 10-6 5zM542 1047l-4 1-4 0-4-2-23-24-3-4-10-20-3-8 1-4 1-2 1-3 2-1 4-2 10-4 10-4 8-3 6 3 4 3 2 3 0 4-1 4-1 2-4 3-2 1-12 0-4 2-2 1-1 3-1 4 2 4 4 5 12 8 8 7 6 4 1 2 2 4 1 6-2 4-4 3zM742 1001l-6 1-6-1-4-3-2-6 0-4 2-5 4-3 4-2 4-1 4 1 4 3 3 3 1 4-1 6-3 4-4 3zM954 1005l-4 1-4-1-4-3-4-6-3-6 0-6 2-4 3-2 6-1 8 1 4 2 3 4 3 6-1 8-3 4-6 3zM688 1043l-6 1-4-2-4-4-4-9-3-5-3-2-10-5-7-5-14-14-2-4 0-6 1-3 4-4 2-1 4-1 4 1 2 0 3 4 4 8 3 6 5 4 9 5 8 0 4-1 5-4 5-7 6-5 6-1 2 1 4 2 2 4-1 8-1 2-4 3-8 4-2 1-3 4-1 2 0 14-1 4-3 4-2 1zM194 1045l-4 1-4 0-6-2-5-4-1-2-1-6 1-4 1-2 3-2 4-1 12 0 8 2 8 0 4-1 8-4 6-6 4-10 2-8 2-5 5-5 5-2 6-1 4 1 4 2 2 1 2 3-1 8-16 18-8 14-5 6-4 2-4 2-16 0-16 5zM982 1155l-4 1-12 0-10-3-9-5-7-8-4-10-4-8-10-12-3-6 1-12 4-8 6-10 1-4-3-5-4-7-2-4-1-4 1-4 2-3 2-1 2-1 4 2 6 3 6 11 4 2 4 2 8 0 16-4 4 0 14-5 4-2 4-3 6-10 6-5 4-2 10-4 16-7 6-4 4-5 2-4 1-10 3-6 2-2 2-1 6 1 2 1 3 3 3 6-1 4-3 9 0 3 1 4 2 6 1 6-1 2-3 4-2 1-4 1-12-4-4 1-15 7-7 5-14 13-8 5-8 4-20 7-22 0-3 0-7 3-4 3-4 5-2 5 1 6 16 30 3 5 6 3 4 1 8 0 4-2 2-3 1-6-1-7-1-3-3-1-6-3-6-1-4-2-3-3-2-4-1-4 2-4 1-2 3-1 6 0 12 5 4 0 8-4 6-4 4-3 14-5 8-4 8-5 7-7 7-4 10-4 8-1 12-4 8 0 4 1 2 1 3 3 1 4-1 6-1 2-4 3-6 3-20 0-4 1-6 3-4 6-6 5-4 2-13 3-7 3-11 5-3 2-3 4-1 2 0 22-3 8-4 8-1 2-10 5zM1164 1145l-4 0-5-5-7-12-6-8-3-6 1-4 1-2 3-2 6-3 14-1 2-1 2-3 1-4 0-6-5-14-3-10-1-5-2-5-8-7-4-1-6 0-6 3-10 8-8 4-4 1-2-1-3-3-1-2-1-4 2-4 5-5 12-7 6-4 9-8 4-6 1-4 4-10 5-10 3-2 4-2 6-1 4 1 4 2 2 4 0 4-2 4-10 10-5 8-1 2 0 4 2 4 8 7 8 7 2 4 4 10 0 10 2 10 9 16 1 6-1 4-3 4-2 1-4 1-12 0-4 2-1 2-1 2 0 4 3 8 1 8-2 4-4 3zM804 1043l-8 1-4-2-2-4-1-8-3-8-4-3-6-3-2 1-2 1-1 2-1 2-1 12-3 4-4 2-10 0-6-2-8 0-3 0-11 4-10 0-2-1-3-3-1-2-1-4 1-3 3-5 4-4 5-2 8-1 8 2 12 0 4-1 4-4 2-4 2-10 2-5 2-1 2-1 6 0 4 2 17 15 5 3 10 1 4 2 3 2 2 4 1 2-3 8-5 6-6 5zM610 1037l-6 1-8-1-6-3-12-4-6 0-8-3-8-4-5-5-5-6-3-6 1-6 2-3 2-1 2-1 4 1 10 8 4 2 16 2 12 7 6 2 4-2 10-5 4-1 4 1 2 1 3 3 1 4-1 6-3 4-4 3-12 6zM450 1057l-4 1-6-1-4-3-2-6-1-4 2-6 0-6-5-14-1-4 1-4 2-3 2-1 8-1 4 1 3 4 2 6 1 12 5 14 1 4-3 6-3 4-2 1zM848 1157l-2 1-4-1-9-5-8-8-1-2-1-4 0-20 1-2 4-10 1-4 0-4-4-12 0-36 6-20 1-14 5-6 1 0 4-1 4 1 6 2 1 2 1 4-1 8-9 16-2 5 0 3 0 28 4 10 5 8 3 6-1 4-2 4-5 6-2 4 0 8 1 4 8 10 2 4 1 2-1 2-1 2-6 5zM968 1041l-6 1-10-1-3-3-1-2-1-2 1-4 2-4 1-2 7-4 10-8 6-3 4 1 6 4 4 6 2 6-1 6-3 4-6 3-12 2zM246 1105l-4 1-6-1-4-3 0-2-1-4 1-12 7-12 12-24 1-4 4-10 6-12 3-4 3-2 6-1 4 1 3 2 1 6-3 6-3 5-4 8-1 15-3 6-10 11-4 10 0 7-3 8-3 4-2 1zM890 1099l-4 1-4-1-8-4-11-11-3-6-2-6-1-8-2-6 1-8 2-5 2-1 2-1 6 1 3 2 2 4 1 20 3 6 1 2 2 1 4 0 4-2 2-3 1-6 0-16-1-4-4-6-4-3-8-5-2-4-1-2 1-8 2-3 4-2 6 1 4 2 8 7 9 17 5 16 0 12-3 8-1 4-6 10-4 4-6 3zM356 1105l-2 1-4-1-4-2-3-3-2-4 1-4 1-2 3-3 7-5 6-8 7-6 6-3 14 0 8-3 2-1 2-3 1-4-1-3-3-11 2-4 2-4 3-2 4-1 4 2 7 7 3 8 0 14-1 2-3 6-4 3-16 8-12 4-9 3-6 6-5 8-4 3-4 2zM644 1071l-4-1-4-2-2-4-1-4 0-16 3-10 2-3 4-2 4 1 4 2 3 4 1 4 0 20-1 4-3 4-6 3zM480 1081l-4 1-4 0-4 0-3-2-5-6-1-4 1-4 2-3 4-2 4-2 6-1 4-2 12-10 4-1 4 1 4 2 3 4 1 6-1 8-3 4-4 3-8 4-12 4zM214 1133l-8 1-6-2-10 0-8 2-14 0-4-2-3-4-1-2-1-4 2-4 3-2 4-1 24 0 2-1 2-2 1-4-1-4-4-4-6-4-3-4-3-6-1-4 0-14 1-4 0-1 2-1 6-3 6 2 6 0 16-7 6-1 2 1 2 1 2 3-1 6-3 6-4 3-4 2-13 1-2 2-1 2 0 4 1 2 15 16 5 10 1 6-1 6-3 6-4 3zM278 1195l-4 1-6 0-2-1-3-3-2-4 1-12 2-5 4-4 16-9 6-5 5-7 13-14 2-4 0-3-3-7-11-10-4-2-4 0-2 1-3 3-3 6 0 6 2 8-1 10-2 4-3 3-4 2-4 1-2-1-2-1-2-6-1-2 0-28 1-2 2-5 14-15 3-6 1-8 2-5 6-5 6-1 2 1 2 1 3 5 1 4-2 6 0 8 1 2 3 4 3 2 5 4 12 8 4 2 16 5 12 1 8 2 3 4 2 4 1 10-2 4-4 4-14 9-10 4-4 1-14-4-10 0-4 1-7 3-9 9-7 17-5 6-4 3zM1072 1117l-6 1-4-1-2-1-2-4-1-6 1-6 2-3 4-3 4-2 8-1 10-3 16-6 16-6 16-8 4-1 4 1 2 1 3 3 1 6-1 6-3 4-4 3-24 8-18 1-7 2-7 4-12 11zM404 1137l-8 1-3-2-3-2-10-24-1-2 1-3 3-3 3-1 4 0 8 2 4-2 5-3 4-6 3-3 6-4 10-9 6-3 6 1 4 2 3 4 1 4-1 6-3 4-4 3-4 2-12 4-3 1-3 2-2 3-3 7-2 8-2 6-3 4-4 3zM486 1191l-4 1-6 0-4-1-2-1-2-4-2-12-3-6-3-2-4-2-16-1-4-2-3-3-1-2-1-4 1-4 1-2 3-1 2 0 10 4 6 0 2-1 2-2 1-2 0-4-2-4-3-1-2-1-16 0-4-1-2-3-1-6 2-4 3-2 6-2 8-2 4-2 4-4 4-7 2-1 4-2 10-1 6 2 4 0 6-3 4-2 4-2 4-1 4 2 3 3 1 2 0 8-4 10 0 8 8 24 0 12 4 12 0 10-2 4-4 3-2 1-22 0-4 1zM1074 1195l-6 1-6-1-6-3-18-5-10-4-8-3-4 1-18 8-6 2-4 1-12 0-4-2-2-4-1-8 2-4 3-2 8-3 18 0 6-3 3-2 3-6 2-16 4-12 6-18 1-2 3-2 4-2 4-1 4 2 5 5 1 4 0 6-3 6-8 12-5 8-2 4 1 6 1 4 2 2 8 4 14 5 16 1 6 3 3 3 1 8-2 4-4 3zM494 1172l2-1 2-3 1-4 0-8-5-12-2-6-2-17-2-3-4-4-6-2-4 1-3 1-2 2-3 6 7 18 1 10 2 10 3 4 5 7 4 2 6-1zM918 1147l-4 1-6-1-3-3-11-10-4-2-4 1-12 6-4 1-2-1-3-3-2-4 0-8 2-4 1-3 2-1 6-3 22 0 6 2 6 3 6 6 2 3 5 7 1 8-2 4-2 1zM1122 1189l-4 1-10 0-4 0-3-2-7-8-8-13-6-8-6-3-6 0-8 2-4-1-2-1-4-6 0-4 2-4 4-5 4-3 6-1 6 1 24 16 3 4 6 10 3 4 6 3 8 0 4-2 2-3 1-2-1-7-4-9-4-4-4-2-18-7-4-2-2-3-2-4 0-2 2-5 2-1 6-3 8 1 6 2 8 4 8 7 13 19 2 4 4 10 4 10 1 4-1 6-3 4-2 1-4 1-18 0-4 1zM234 1189l-6 1-14 0-4-1-2-1-2-4-1-8 3-6 2-2 4-2 8-2 4-2 2-2 3-6 0-22 1-4 2-4 2-1 2-1 4-1 2 1 2 1 3 5 1 2 0 4-2 6 0 4 0 12 2 6 0 4-3 10-2 4-5 6-6 3zM1180 1205l-4 1-4-1-2-3-2-4-1-4 0-22 3-6 9-10 3-6 1-4 0-12 3-6 3-4 3-2 6-1 4 2 3 3 1 2 0 6-2 8 1 4 3 6 12 14 4 6 7 8 1 4 0 8-2 4-4 3-8 1-4-2-6-6-2-6-1-12-3-6-4-3-2-1-4 0-2 1-1 1-1 2 0 26-3 6-1 2-4 3zM342 1144l4-2 2-2 1-2-1-5-2-3-6-2-12 0-4 2-1 2-1 4 0 4 2 2 2 2 4 1 12-1zM182 1203l-4 1-4-1-2-1-2-4-1-4 0-20 5-18 2-5 6-5 8-1 4 1 2 3 2 3 0 4-6 14 0 14-3 8-3 6-4 5zM446 1197l-6 1-8-1-12-6-9-9-6-8-3-1-2-1-6 0-4 1-4 3-4 6-4 4-4 3-2 1-34 0-14 4-12 0-3-2-3-2-1-4 0-4 2-4 5-4 4-1 40 0 6-3 13-12 9-4 16-1 6-2 4 0 2 1 4 2 7 12 5 7 6 3 8 2 4 2 4 2 2 4 0 4-2 4-4 3zM906 1209l-2 0-4-1-2-2-2-4-1-4 0-18-2-4-5-3-2-1-2 1-4 2-2 4-1 7-2 4-3 4-4 2-2 0-2-1-3-3-2-4 0-12 1-4 4-8 5-6 5-2 6-2 8-1 2 1 8 4 8 7 3 5 4 12 1 10-1 10-2 4-5 3zM952 1191l-6 1-8-1-9-9-6-10-2-6 2-4 2-4 3-1 2 0 4 1 13 8 5 4 4 2 3 6 1 4-2 4-6 5zM840 1191l-4 1-14 0-4-1-2-1-4-4-1-4 0-8 2-4 5-4 6-1 6 1 6 2 6 2 2 3 2 3 1 2 1 4-2 4-6 5z"/><ellipse cx="419" cy="99" rx="19" ry="17"/><ellipse cx="470" cy="78" rx="14" ry="22" transform="rotate(35 470 78)"/><ellipse cx="523" cy="76" rx="15" ry="22"/><ellipse cx="566" cy="92" rx="16" ry="17"/><ellipse cx="410" cy="147" rx="17" ry="18"/><ellipse cx="534" cy="127" rx="19" ry="13" transform="rotate(10 534 127)"/><ellipse cx="612" cy="129" rx="17" ry="17"/><ellipse cx="391" cy="203" rx="13" ry="22" transform="rotate(-10 391 203)"/><ellipse cx="419" cy="235" rx="9" ry="9"/><ellipse cx="364" cy="276" rx="20" ry="26" transform="rotate(20 364 276)"/><ellipse cx="341" cy="345" rx="21" ry="17" transform="rotate(15 341 345)"/><ellipse cx="396" cy="322" rx="14" ry="14"/><ellipse cx="272" cy="539" rx="19" ry="27" transform="rotate(10 272 539)"/><ellipse cx="244" cy="635" rx="21" ry="21"/><ellipse cx="695" cy="71" rx="11" ry="12"/><ellipse cx="761" cy="55" rx="10" ry="10"/><ellipse cx="805" cy="76" rx="17" ry="24" transform="rotate(10 805 76)"/><ellipse cx="738" cy="94" rx="20" ry="19"/><ellipse cx="681" cy="100" rx="4" ry="4"/><ellipse cx="182" cy="791" rx="21" ry="21"/><ellipse cx="175" cy="966" rx="13" ry="16"/><ellipse cx="110" cy="1017" rx="17" ry="13" transform="rotate(10 110 1017)"/><ellipse cx="97" cy="1054" rx="15" ry="12"/><ellipse cx="161" cy="1031" rx="10" ry="19" transform="rotate(20 161 1031)"/><ellipse cx="60" cy="1114" rx="21" ry="19"/><ellipse cx="106" cy="1100" rx="15" ry="16"/><ellipse cx="41" cy="1162" rx="13" ry="13"/><ellipse cx="81" cy="1169" rx="15" ry="17"/><ellipse cx="120" cy="1146" rx="12" ry="18" transform="rotate(20 120 1146)"/><ellipse cx="53" cy="1208" rx="14" ry="15"/><ellipse cx="99" cy="1208" rx="12" ry="10"/><ellipse cx="94" cy="1245" rx="20" ry="15" transform="rotate(10 94 1245)"/><ellipse cx="140" cy="1265" rx="14" ry="14"/><ellipse cx="177" cy="1238" rx="18" ry="22"/><ellipse cx="230" cy="1233" rx="16" ry="21"/><ellipse cx="283" cy="1238" rx="18" ry="21"/><ellipse cx="343" cy="1252" rx="16" ry="21"/><ellipse cx="497" cy="1238" rx="14" ry="20" transform="rotate(20 497 1238)"/><ellipse cx="539" cy="1219" rx="13" ry="22" transform="rotate(15 539 1219)"/><ellipse cx="550" cy="1164" rx="20" ry="20"/><ellipse cx="603" cy="1118" rx="14" ry="19" transform="rotate(-20 603 1118)"/><ellipse cx="645" cy="1095" rx="12" ry="15" transform="rotate(-10 645 1095)"/><ellipse cx="658" cy="1141" rx="11" ry="17" transform="rotate(-10 658 1141)"/><ellipse cx="685" cy="1097" rx="13" ry="13"/><ellipse cx="725" cy="1123" rx="17" ry="20"/><ellipse cx="672" cy="1146" rx="10" ry="14"/><ellipse cx="791" cy="1215" rx="15" ry="22" transform="rotate(-15 791 1215)"/><ellipse cx="828" cy="1240" rx="16" ry="18" transform="rotate(20 828 1240)"/><ellipse cx="883" cy="1252" rx="18" ry="19"/><ellipse cx="920" cy="1231" rx="13" ry="18"/><ellipse cx="1035" cy="1256" rx="16" ry="21"/><ellipse cx="1072" cy="1226" rx="12" ry="12"/><ellipse cx="1081" cy="1263" rx="12" ry="11"/><ellipse cx="1123" cy="1233" rx="17" ry="19"/><ellipse cx="1251" cy="1226" rx="15" ry="20" transform="rotate(20 1251 1226)"/><ellipse cx="1224" cy="1192" rx="12" ry="20" transform="rotate(10 1224 1192)"/><ellipse cx="1254" cy="1167" rx="13" ry="13"/><ellipse cx="1291" cy="1192" rx="9" ry="9"/><ellipse cx="1245" cy="1081" rx="19" ry="19"/><ellipse cx="1219" cy="1012" rx="20" ry="18"/><ellipse cx="1164" cy="851" rx="18" ry="25" transform="rotate(-10 1164 851)"/><ellipse cx="1136" cy="773" rx="21" ry="21"/><ellipse cx="975" cy="311" rx="18" ry="21"/><ellipse cx="998" cy="389" rx="20" ry="20"/><ellipse cx="1026" cy="467" rx="19" ry="22" transform="rotate(-10 1026 467)"/><ellipse cx="1077" cy="736" rx="13" ry="15"/><ellipse cx="1058" cy="681" rx="10" ry="10"/><line x1="389" y1="941" x2="407" y2="974" stroke="#000" stroke-width="21" stroke-linecap="round"/><circle cx="389" cy="941" r="16"/><circle cx="407" cy="974" r="16"/><line x1="399" y1="1252" x2="439" y2="1254" stroke="#000" stroke-width="21" stroke-linecap="round"/><circle cx="399" cy="1252" r="16"/><circle cx="439" cy="1254" r="16"/><line x1="959" y1="1249" x2="994" y2="1249" stroke="#000" stroke-width="22" stroke-linecap="round"/><circle cx="959" cy="1249" r="17"/><circle cx="994" cy="1249" r="17"/><line x1="1159" y1="1256" x2="1199" y2="1260" stroke="#000" stroke-width="22" stroke-linecap="round"/><circle cx="1159" cy="1256" r="17"/><circle cx="1199" cy="1260" r="17"/><line x1="1184" y1="932" x2="1209" y2="972" stroke="#000" stroke-width="22" stroke-linecap="round"/><circle cx="1184" cy="932" r="17"/><circle cx="1209" cy="972" r="17"/><line x1="1109" y1="687" x2="1124" y2="717" stroke="#000" stroke-width="20" stroke-linecap="round"/><circle cx="1109" cy="687" r="15"/><circle cx="1124" cy="717" r="15"/><line x1="851" y1="89" x2="879" y2="91" stroke="#000" stroke-width="17" stroke-linecap="round"/><circle cx="851" cy="89" r="13"/><circle cx="879" cy="91" r="13"/><line x1="915" y1="110" x2="931" y2="164" stroke="#000" stroke-width="21" stroke-linecap="round"/><circle cx="915" cy="110" r="16"/><circle cx="931" cy="164" r="16"/><line x1="943" y1="218" x2="962" y2="258" stroke="#000" stroke-width="22" stroke-linecap="round"/><circle cx="943" cy="218" r="17"/><circle cx="962" cy="258" r="17"/><line x1="1067" y1="592" x2="1087" y2="620" stroke="#000" stroke-width="21" stroke-linecap="round"/><circle cx="1067" cy="592" r="16"/><circle cx="1087" cy="620" r="16"/><line x1="1259" y1="1117" x2="1279" y2="1152" stroke="#000" stroke-width="16" stroke-linecap="round"/><circle cx="1259" cy="1117" r="12"/><circle cx="1279" cy="1152" r="12"/><circle cx="603" cy="69" r="5" fill="#777"/><circle cx="685" cy="101" r="5" fill="#777"/></g></svg><div style="left:2726px;top:181px;width:498px;height:506px;background:rgba(0,0,0,0.25);filter:blur(3px)"></div><div style="left:2731px;top:185px;width:489px;height:498px;background:#535353;"></div><div style="left:2731px;top:185px;width:112px;height:58px;background:#434343;"></div><div style="left:2957px;top:185px;width:263px;height:58px;background:#434343;"></div><div style="left:2731px;top:249px;width:459px;height:259px;background:#535353;"></div><div style="left:3190px;top:249px;width:30px;height:368px;background:#4b4b4b;"></div><div style="left:2731px;top:508px;width:459px;height:109px;background:#4b4b4b;"></div><div style="left:2731px;top:616px;width:489px;height:2px;background:#3a3a3a;"></div><div style="left:2731px;top:668px;width:489px;height:2px;background:#3a3a3a;"></div><div style="left:2771px;top:249px;width:1px;height:259px;background:#474747;"></div><div style="left:2814px;top:294px;width:376px;height:2px;background:#474747;"></div><div style="left:2814px;top:337px;width:376px;height:2px;background:#474747;"></div><div style="left:2874px;top:380px;width:316px;height:2px;background:#474747;"></div><div style="left:2814px;top:423px;width:376px;height:2px;background:#474747;"></div><div style="left:2874px;top:466px;width:316px;height:2px;background:#474747;"></div><div style="left:2874px;top:467px;width:316px;height:41px;background:#6b6b6b;"></div><div style="left:3297px;top:1462px;width:513px;height:650px;background:#535353;"></div><div style="left:3355px;top:1462px;width:455px;height:77px;background:#6a6a6a;"></div><div style="left:3297px;top:1537.5px;width:513px;height:2px;background:#474747;"></div><div style="left:3297px;top:1614.5px;width:513px;height:2px;background:#474747;"></div><div style="left:3297px;top:1691.5px;width:513px;height:2px;background:#474747;"></div><div style="left:3297px;top:1768.5px;width:513px;height:2px;background:#474747;"></div><div style="left:3297px;top:1845.5px;width:513px;height:2px;background:#474747;"></div><div style="left:3297px;top:1922.5px;width:513px;height:2px;background:#474747;"></div><div style="left:3297px;top:1999.5px;width:513px;height:2px;background:#474747;"></div><div style="left:3354px;top:1462px;width:1.5px;height:540px;background:#474747;"></div><svg style="left:38px;top:4px;" width="28" height="33" viewBox="0 0 384 512"><path fill="#fbeeec" d="M318.7 268.7c-.2-36.7 16.4-64.4 50-84.8-18.8-26.9-47.2-41.7-84.7-44.6-35.5-2.8-74.3 20.7-88.5 20.7-15 0-49.4-19.7-76.4-19.7C63.3 141.2 4 184.8 4 273.5q0 39.3 14.4 81.2c12.8 36.7 59 126.7 107.2 125.2 25.2-.6 43-17.9 75.8-17.9 31.8 0 48.3 17.9 76.4 17.9 48.6-.7 90.4-82.5 102.6-119.3-65.2-30.7-61.7-90-61.7-91.9zm-56.6-164.2c27.3-32.4 24.8-61.9 24-72.5-24.1 1.4-52 16.4-67.9 34.9-17.5 19.8-27.8 44.3-25.6 71.9 26.1 2 49.9-11.4 69.5-34.3z"/></svg><svg style="left:3254px;top:2px;" width="42" height="42" viewBox="0 0 42 42"><circle cx="21" cy="21" r="18" fill="none" stroke="#fbeeec" stroke-width="2.4"/><path d="M13 12 A7 7 0 0 1 27 10" fill="none" stroke="#fbeeec" stroke-width="2.6"/><path d="M31 17 A7 7 0 0 1 28 31" fill="none" stroke="#fbeeec" stroke-width="2.6"/><circle cx="21" cy="14" r="4" fill="#fbeeec"/><circle cx="27" cy="25" r="4" fill="#fbeeec"/><circle cx="12" cy="30" r="8" fill="#fbeeec"/></svg><svg style="left:3322px;top:4px;" width="48" height="38" viewBox="0 0 48 38"><path d="M5 29 L8 14 Q10 8 18 8 L26 8 Q32 8 34 14 L37 29 Z" fill="#fbeeec"/><rect x="16" y="29" width="8" height="5" fill="#fbeeec"/><rect x="12" y="33" width="16" height="3" fill="#fbeeec"/><circle cx="36" cy="13" r="9" fill="#f0a43a"/></svg><svg style="left:3396px;top:4px;" width="40" height="38" viewBox="0 0 40 38"><path d="M11 4 L2 10 L11 16 L20 10Z M29 4 L20 10 L29 16 L38 10Z M2 22 L11 28 L20 22 L11 16Z M20 22 L29 16 L38 22 L29 28Z M11 30 L20 36 L20 30Z" fill="#fbeeec"/><circle cx="29" cy="28" r="8" fill="#bf3322"/><circle cx="29" cy="28" r="6" fill="none" stroke="#fbeeec" stroke-width="2"/></svg><svg style="left:3465px;top:6px;" width="30" height="30" viewBox="0 0 30 30"><path d="M15 2 A13 13 0 1 0 28 20 A11 11 0 0 1 15 2Z" fill="#fbeeec"/></svg><svg style="left:3530px;top:4px;" width="20" height="36" viewBox="0 0 20 36"><path d="M4 10 L15 24 L9 30 L9 6 L15 12 L4 26" fill="none" stroke="#fbeeec" stroke-width="2.4" stroke-linejoin="round"/></svg><svg style="left:3588px;top:6px;" width="34" height="30" viewBox="0 0 34 30"><path d="M2 11 A22 22 0 0 1 32 11" fill="none" stroke="#fbeeec" stroke-width="3.2"/><path d="M7 17 A14 14 0 0 1 27 17" fill="none" stroke="#fbeeec" stroke-width="3.2"/><path d="M17 27 L11 21 A8 8 0 0 1 23 21 Z" fill="#fbeeec"/></svg><svg style="left:3652px;top:7px;" width="30" height="30" viewBox="0 0 30 30"><circle cx="12" cy="12" r="8.5" fill="none" stroke="#fbeeec" stroke-width="3"/><line x1="18.5" y1="18.5" x2="26" y2="26" stroke="#fbeeec" stroke-width="3.4" stroke-linecap="round"/></svg><svg style="left:3712px;top:8px;" width="32" height="30" viewBox="0 0 32 30"><rect x="2" y="2" width="27" height="11" rx="5.5" fill="none" stroke="#fbeeec" stroke-width="2.4"/><circle cx="8" cy="7.5" r="3" fill="#fbeeec"/><rect x="2" y="16" width="27" height="12" rx="6" fill="#fbeeec"/><circle cx="23" cy="22" r="3" fill="#bf3322"/></svg><svg style="left:3771px;top:5px;" width="36" height="36" viewBox="0 0 36 36"><circle cx="18" cy="18" r="15.5" fill="none" stroke="#fbeeec" stroke-width="2.2"/><line x1="10" y1="24" x2="25" y2="12" stroke="#fbeeec" stroke-width="2"/></svg><svg style="left:15px;top:54px;" width="102" height="26" viewBox="0 0 102 26"><circle cx="13" cy="13" r="11.2" fill="#ed6a5e"/><circle cx="13" cy="13" r="3" fill="#8c1a10"/><circle cx="50.5" cy="13" r="11.2" fill="#f5bf4f"/><circle cx="88" cy="13" r="11.2" fill="#61c554"/></svg><svg style="left:9px;top:106px;" width="6" height="40" viewBox="0 0 6 40"><rect x="1" y="2" width="3" height="2" fill="#3f3f3f"/><rect x="1" y="6" width="3" height="2" fill="#3f3f3f"/><rect x="1" y="10" width="3" height="2" fill="#3f3f3f"/><rect x="1" y="14" width="3" height="2" fill="#3f3f3f"/><rect x="1" y="18" width="3" height="2" fill="#3f3f3f"/><rect x="1" y="22" width="3" height="2" fill="#3f3f3f"/><rect x="1" y="26" width="3" height="2" fill="#3f3f3f"/><rect x="1" y="30" width="3" height="2" fill="#3f3f3f"/><rect x="1" y="34" width="3" height="2" fill="#3f3f3f"/></svg><svg style="left:34px;top:108px;" width="38" height="36" viewBox="0 0 38 36"><path d="M19 2 L36 17 L31 17 L31 34 L23 34 L23 24 L15 24 L15 34 L7 34 L7 17 L2 17 Z" fill="#dcdcdc"/></svg><div style="left:100px;top:100px;width:1px;height:55px;background:#3d3d3d;"></div><div style="left:205px;top:100px;width:1px;height:55px;background:#3d3d3d;"></div><div style="left:333px;top:100px;width:1px;height:55px;background:#3d3d3d;"></div><svg style="left:118px;top:110px;" width="33" height="33" viewBox="0 0 33 33"><circle cx="13.2" cy="13.2" r="11.2" fill="none" stroke="#dcdcdc" stroke-width="2.6"/><line x1="21.3" y1="21.3" x2="31.0" y2="31.0" stroke="#dcdcdc" stroke-width="3.5100000000000002" stroke-linecap="round"/><path d="M13.2 6.5 A6.7 6.7 0 0 1 19.9 13.2" fill="none" stroke="#dcdcdc" stroke-width="2.08"/></svg><svg style="left:172px;top:123px;" width="16" height="11" viewBox="0 0 16 11"><path d="M1.5 2 L8 8.5 L14.5 2" fill="none" stroke="#dcdcdc" stroke-width="2"/></svg><div style="left:221px;top:103.5px;width:45px;height:48px;background:#333333;border-radius:5px;border:1px solid #4a4a4a"></div><svg style="left:228px;top:111px;" width="34" height="34" viewBox="0 0 34 34"><circle cx="13.6" cy="13.6" r="11.6" fill="none" stroke="#dcdcdc" stroke-width="2.6"/><line x1="21.9" y1="21.9" x2="32.0" y2="32.0" stroke="#dcdcdc" stroke-width="3.5100000000000002" stroke-linecap="round"/><path d="M7.2 13.6 H20.0 M13.6 7.2 V20.0" stroke="#dcdcdc" stroke-width="2.6"/></svg><svg style="left:284px;top:111px;" width="34" height="34" viewBox="0 0 34 34"><circle cx="13.6" cy="13.6" r="11.6" fill="none" stroke="#dcdcdc" stroke-width="2.6"/><line x1="21.9" y1="21.9" x2="32.0" y2="32.0" stroke="#dcdcdc" stroke-width="3.5100000000000002" stroke-linecap="round"/><path d="M7.2 13.6 H20.0" stroke="#dcdcdc" stroke-width="2.6"/></svg><svg style="left:351px;top:116px;" width="23" height="23" viewBox="0 0 23 23"><rect x="0" y="0" width="23" height="23" rx="4" fill="#d7d7d7"/><path d="M5 11.5 L9.5 16 L18 6.5" fill="none" stroke="#222" stroke-width="3"/></svg><svg style="left:654px;top:116px;" width="23" height="23" viewBox="0 0 23 23"><rect x="1" y="1" width="21" height="21" rx="4" fill="#474747" stroke="#6e6e6e" stroke-width="1.5"/></svg><svg style="left:919.5px;top:116px;" width="23" height="23" viewBox="0 0 23 23"><rect x="0" y="0" width="23" height="23" rx="4" fill="#d7d7d7"/><path d="M5 11.5 L9.5 16 L18 6.5" fill="none" stroke="#222" stroke-width="3"/></svg><div style="left:1139.5px;top:103.6px;width:96.09999999999991px;height:48.4px;background:#434343;border:1.5px solid #3a3a3a;border-radius:5px"></div><div style="left:1256.8px;top:103.6px;width:144.20000000000005px;height:48.4px;background:#434343;border:1.5px solid #3a3a3a;border-radius:5px"></div><div style="left:1422px;top:103.6px;width:148px;height:48.4px;background:#434343;border:1.5px solid #3a3a3a;border-radius:5px"></div><svg style="left:3649px;top:111px;" width="34" height="34" viewBox="0 0 34 34"><circle cx="13.6" cy="13.6" r="11.6" fill="none" stroke="#dcdcdc" stroke-width="2.6"/><line x1="21.9" y1="21.9" x2="32.0" y2="32.0" stroke="#dcdcdc" stroke-width="3.5100000000000002" stroke-linecap="round"/></svg><svg style="left:3705px;top:112px;" width="40" height="34" viewBox="0 0 40 34"><rect x="2" y="2" width="36" height="30" fill="none" stroke="#dcdcdc" stroke-width="3"/><rect x="7" y="8" width="4" height="4" fill="#dcdcdc"/><rect x="7" y="14" width="4" height="4" fill="#dcdcdc"/><rect x="7" y="20" width="4" height="4" fill="#dcdcdc"/></svg><svg style="left:3764px;top:122px;" width="17" height="12" viewBox="0 0 17 12"><path d="M1.5 2 L8.5 9 L15.5 2" fill="none" stroke="#dcdcdc" stroke-width="2"/></svg><svg style="left:3788px;top:105px;" width="40" height="40" viewBox="0 0 40 40"><path d="M9 14 H3 V37 H37 V14 H31" fill="none" stroke="#dcdcdc" stroke-width="3.4"/><path d="M20 3 L12 11 H17 V26 H23 V11 H28 Z" fill="#dcdcdc"/></svg><div style="left:584px;top:165px;width:1px;height:55px;background:#363636;"></div><div style="left:983px;top:165px;width:1px;height:55px;background:#363636;"></div><div style="left:984px;top:166px;width:580px;height:54px;background:#535353;"></div><div style="left:1564px;top:165px;width:1px;height:55px;background:#363636;"></div><svg style="left:101.5px;top:186px;" width="14" height="14" viewBox="0 0 14 14"><path d="M1.5 1.5 L12.5 12.5 M12.5 1.5 L1.5 12.5" stroke="#b0b0b0" stroke-width="1.8"/></svg><svg style="left:598.5px;top:186px;" width="14" height="14" viewBox="0 0 14 14"><path d="M1.5 1.5 L12.5 12.5 M12.5 1.5 L1.5 12.5" stroke="#b0b0b0" stroke-width="1.8"/></svg><svg style="left:998px;top:186px;" width="14" height="14" viewBox="0 0 14 14"><path d="M1.5 1.5 L12.5 12.5 M12.5 1.5 L1.5 12.5" stroke="#b0b0b0" stroke-width="1.8"/></svg><svg style="left:9px;top:170px;" width="16" height="14" viewBox="0 0 16 14"><path d="M2 2 L6.5 7 L2 12 M8.5 2 L13 7 L8.5 12" fill="none" stroke="#cfcfcf" stroke-width="1.8"/></svg><svg style="left:25px;top:194px;" width="36" height="8" viewBox="0 0 36 8"><rect x="0" y="0" width="2" height="8" fill="#3c3c3c"/><rect x="4" y="0" width="2" height="8" fill="#3c3c3c"/><rect x="8" y="0" width="2" height="8" fill="#3c3c3c"/><rect x="12" y="0" width="2" height="8" fill="#3c3c3c"/><rect x="16" y="0" width="2" height="8" fill="#3c3c3c"/><rect x="20" y="0" width="2" height="8" fill="#3c3c3c"/><rect x="24" y="0" width="2" height="8" fill="#3c3c3c"/><rect x="28" y="0" width="2" height="8" fill="#3c3c3c"/><rect x="32" y="0" width="2" height="8" fill="#3c3c3c"/></svg><svg style="left:21px;top:228px;" width="40" height="40" viewBox="0 0 40 40"><path d="M20 3 L25 9 H22 V18 H31 V15 L37 20 L31 25 V22 H22 V31 H25 L20 37 L15 31 H18 V22 H9 V25 L3 20 L9 15 V18 H18 V9 H15 Z" fill="#dcdcdc"/></svg><svg style="left:63px;top:260px;" width="8" height="8" viewBox="0 0 8 8"><path d="M8 0 L8 8 L0 8Z" fill="#c8c8c8"/></svg><svg style="left:21px;top:284px;" width="40" height="40" viewBox="0 0 40 40"><rect x="4" y="5" width="32" height="30" fill="none" stroke="#dcdcdc" stroke-width="2.6" stroke-dasharray="7 4.5"/></svg><svg style="left:63px;top:316px;" width="8" height="8" viewBox="0 0 8 8"><path d="M8 0 L8 8 L0 8Z" fill="#c8c8c8"/></svg><svg style="left:21px;top:342px;" width="40" height="40" viewBox="0 0 40 40"><ellipse cx="22" cy="16" rx="15" ry="11" fill="none" stroke="#dcdcdc" stroke-width="2.6"/><path d="M9 22 Q4 30 11 31 Q17 32 14 38" fill="none" stroke="#dcdcdc" stroke-width="2.4"/><ellipse cx="11" cy="27" rx="5" ry="3.5" fill="none" stroke="#dcdcdc" stroke-width="2.2"/></svg><svg style="left:63px;top:374px;" width="8" height="8" viewBox="0 0 8 8"><path d="M8 0 L8 8 L0 8Z" fill="#c8c8c8"/></svg><svg style="left:21px;top:395px;" width="40" height="40" viewBox="0 0 40 40"><path d="M5 35 L24 14" stroke="#dcdcdc" stroke-width="7" stroke-linecap="round"/><path d="M12 4 L13.5 8.5 L18 10 L13.5 11.5 L12 16 L10.5 11.5 L6 10 L10.5 8.5Z M30 3 L31.5 7.5 L36 9 L31.5 10.5 L30 15 L28.5 10.5 L24 9 L28.5 7.5Z M29 18 L30 21 L33 22 L30 23 L29 26 L28 23 L25 22 L28 21Z" fill="#dcdcdc"/></svg><svg style="left:63px;top:427px;" width="8" height="8" viewBox="0 0 8 8"><path d="M8 0 L8 8 L0 8Z" fill="#c8c8c8"/></svg><svg style="left:21px;top:452px;" width="40" height="40" viewBox="0 0 40 40"><path d="M11 3 V29 H36 M2 10 H7 M29 10 H29 V38 M33 32 H38" fill="none" stroke="#dcdcdc" stroke-width="3"/><path d="M4 10 H29 V34" fill="none" stroke="#dcdcdc" stroke-width="3"/></svg><svg style="left:63px;top:484px;" width="8" height="8" viewBox="0 0 8 8"><path d="M8 0 L8 8 L0 8Z" fill="#c8c8c8"/></svg><svg style="left:21px;top:508px;" width="40" height="40" viewBox="0 0 40 40"><rect x="4" y="4" width="32" height="32" fill="none" stroke="#dcdcdc" stroke-width="2.4"/><path d="M4 4 L36 36 M36 4 L4 36" stroke="#dcdcdc" stroke-width="2.2"/><circle cx="4" cy="4" r="2.5" fill="#dcdcdc"/><circle cx="36" cy="4" r="2.5" fill="#dcdcdc"/><circle cx="4" cy="36" r="2.5" fill="#dcdcdc"/><circle cx="36" cy="36" r="2.5" fill="#dcdcdc"/></svg><svg style="left:21px;top:565px;" width="40" height="40" viewBox="0 0 40 40"><path d="M30 3 Q37 3 37 10 L31 16 L33 18 L29 22 L18 11 L22 7 L24 9 Z" fill="#dcdcdc"/><path d="M20 15 L7 28 Q4 33 5 35 Q7 36 12 33 L25 20" fill="none" stroke="#dcdcdc" stroke-width="2.6"/></svg><svg style="left:63px;top:597px;" width="8" height="8" viewBox="0 0 8 8"><path d="M8 0 L8 8 L0 8Z" fill="#c8c8c8"/></svg><svg style="left:21px;top:621px;" width="40" height="40" viewBox="0 0 40 40"><rect x="8" y="9" width="24" height="22" fill="#8a8a8a" stroke="#dcdcdc" stroke-width="2.6"/><path d="M2 14 H8 M2 20 H8 M2 26 H8 M32 14 H38 M32 20 H38 M32 26 H38 M14 3 V9 M20 3 V9 M26 3 V9 M14 31 V37 M20 31 V37 M26 31 V37" stroke="#dcdcdc" stroke-width="2.2"/></svg><svg style="left:63px;top:653px;" width="8" height="8" viewBox="0 0 8 8"><path d="M8 0 L8 8 L0 8Z" fill="#c8c8c8"/></svg><svg style="left:21px;top:677px;" width="40" height="40" viewBox="0 0 40 40"><path d="M36 3 L17 24 L21 27 Z" fill="#dcdcdc"/><path d="M15 25 Q7 26 7 33 Q6 36 3 37 Q16 39 19 29 Z" fill="#dcdcdc"/></svg><svg style="left:63px;top:709px;" width="8" height="8" viewBox="0 0 8 8"><path d="M8 0 L8 8 L0 8Z" fill="#c8c8c8"/></svg><svg style="left:21px;top:733px;" width="40" height="40" viewBox="0 0 40 40"><circle cx="20" cy="9" r="6" fill="#dcdcdc"/><path d="M17 14 H23 L24 22 H33 Q35 22 35 25 V29 H5 V25 Q5 22 8 22 H16 Z" fill="#dcdcdc"/><rect x="5" y="32" width="30" height="4" fill="#dcdcdc"/></svg><svg style="left:63px;top:765px;" width="8" height="8" viewBox="0 0 8 8"><path d="M8 0 L8 8 L0 8Z" fill="#c8c8c8"/></svg><svg style="left:21px;top:789px;" width="40" height="40" viewBox="0 0 40 40"><path d="M37 6 L20 26 L23 29 Z" fill="#dcdcdc"/><path d="M18 27 Q10 27 10 34 Q9 36 6 38 Q18 40 21 31 Z" fill="#dcdcdc"/><path d="M26 6 Q12 2 7 10 Q3 17 13 19 Q19 18 15 13 Q12 10 8 14" fill="none" stroke="#dcdcdc" stroke-width="2.4"/><path d="M30 20 Q36 28 30 36" fill="none" stroke="#dcdcdc" stroke-width="2.2"/></svg><svg style="left:63px;top:821px;" width="8" height="8" viewBox="0 0 8 8"><path d="M8 0 L8 8 L0 8Z" fill="#c8c8c8"/></svg><svg style="left:21px;top:847px;" width="40" height="40" viewBox="0 0 40 40"><path d="M24 4 L37 17 L22 32 L9 32 L3 26 Z" fill="#dcdcdc"/><path d="M3 37 H37" stroke="#dcdcdc" stroke-width="2.4"/></svg><svg style="left:63px;top:879px;" width="8" height="8" viewBox="0 0 8 8"><path d="M8 0 L8 8 L0 8Z" fill="#c8c8c8"/></svg><svg style="left:21px;top:902px;" width="40" height="40" viewBox="0 0 40 40"><defs><linearGradient id="tg" x1="0" x2="1" y1="0" y2="0"><stop offset="0" stop-color="#2a2a2a"/><stop offset="1" stop-color="#e0e0e0"/></linearGradient></defs><rect x="4" y="6" width="32" height="28" fill="url(#tg)" stroke="#dcdcdc" stroke-width="2.4"/></svg><svg style="left:63px;top:934px;" width="8" height="8" viewBox="0 0 8 8"><path d="M8 0 L8 8 L0 8Z" fill="#c8c8c8"/></svg><svg style="left:21px;top:957px;" width="40" height="40" viewBox="0 0 40 40"><path d="M20 3 L35 36 H5 Z" fill="#dcdcdc"/></svg><svg style="left:63px;top:989px;" width="8" height="8" viewBox="0 0 8 8"><path d="M8 0 L8 8 L0 8Z" fill="#c8c8c8"/></svg><svg style="left:21px;top:1015px;" width="40" height="40" viewBox="0 0 40 40"><circle cx="23" cy="16" r="11" fill="#dcdcdc"/><path d="M15 24 L5 34" stroke="#dcdcdc" stroke-width="4" stroke-linecap="round"/></svg><svg style="left:63px;top:1047px;" width="8" height="8" viewBox="0 0 8 8"><path d="M8 0 L8 8 L0 8Z" fill="#c8c8c8"/></svg><svg style="left:21px;top:1070px;" width="40" height="40" viewBox="0 0 40 40"><path d="M28 4 L36 12 L31 17 Q30 28 10 34 L4 36 L6 30 Q12 10 23 9 Z" fill="none" stroke="#dcdcdc" stroke-width="2.6" stroke-linejoin="round"/><path d="M5 35 L15 25" stroke="#dcdcdc" stroke-width="2"/><circle cx="17" cy="23" r="2.6" fill="#dcdcdc"/></svg><svg style="left:63px;top:1102px;" width="8" height="8" viewBox="0 0 8 8"><path d="M8 0 L8 8 L0 8Z" fill="#c8c8c8"/></svg><svg style="left:21px;top:1127px;" width="40" height="40" viewBox="0 0 40 40"><path d="M5 4 H35 V12 H32 V8 H23 V33 H27 V36 H13 V33 H17 V8 H8 V12 H5 Z" fill="#dcdcdc"/></svg><svg style="left:63px;top:1159px;" width="8" height="8" viewBox="0 0 8 8"><path d="M8 0 L8 8 L0 8Z" fill="#c8c8c8"/></svg><svg style="left:21px;top:1183px;" width="40" height="40" viewBox="0 0 40 40"><path d="M8 3 L31 20 L21 21 L27 34 L22 36 L16 23 L9 30 Z" fill="#dcdcdc"/></svg><svg style="left:63px;top:1215px;" width="8" height="8" viewBox="0 0 8 8"><path d="M8 0 L8 8 L0 8Z" fill="#c8c8c8"/></svg><svg style="left:21px;top:1240px;" width="40" height="40" viewBox="0 0 40 40"><ellipse cx="20" cy="20" rx="17" ry="14" fill="#6e6e6e" stroke="#dcdcdc" stroke-width="2.6"/></svg><svg style="left:63px;top:1272px;" width="8" height="8" viewBox="0 0 8 8"><path d="M8 0 L8 8 L0 8Z" fill="#c8c8c8"/></svg><svg style="left:21px;top:1296px;" width="40" height="40" viewBox="0 0 40 40"><path d="M9 22 V10 Q9 7 11.5 7 Q14 7 14 10 V19 V6 Q14 3 16.5 3 Q19 3 19 6 V19 V5 Q19 2 21.5 2 Q24 2 24 5 V19 V8 Q24 5 26.5 5 Q29 5 29 8 V25 L33 19 Q36 16 38 19 L31 32 Q27 38 20 38 Q11 38 9 30 Z" fill="#dcdcdc"/></svg><svg style="left:63px;top:1328px;" width="8" height="8" viewBox="0 0 8 8"><path d="M8 0 L8 8 L0 8Z" fill="#c8c8c8"/></svg><div style="left:7px;top:1346px;width:68px;height:52px;background:#333333;border-radius:4px;border:1px solid #484848"></div><svg style="left:21px;top:1352px;" width="40" height="40" viewBox="0 0 40 40"><circle cx="16" cy="16" r="12" fill="none" stroke="#dcdcdc" stroke-width="2.8"/><path d="M16 8 A8 8 0 0 1 24 16" fill="none" stroke="#dcdcdc" stroke-width="2.4"/><line x1="25" y1="25" x2="36" y2="36" stroke="#dcdcdc" stroke-width="3.8" stroke-linecap="round"/></svg><svg style="left:21px;top:1408px;" width="40" height="40" viewBox="0 0 40 40"><circle cx="8" cy="20" r="3.6" fill="#dcdcdc"/><circle cx="20" cy="20" r="3.6" fill="#dcdcdc"/><circle cx="32" cy="20" r="3.6" fill="#dcdcdc"/></svg><svg style="left:63px;top:1440px;" width="8" height="8" viewBox="0 0 8 8"><path d="M8 0 L8 8 L0 8Z" fill="#c8c8c8"/></svg><svg style="left:10px;top:1468px;" width="22" height="22" viewBox="0 0 22 22"><rect x="6" y="6" width="14" height="14" fill="#e0e0e0" stroke="#222" stroke-width="1"/><rect x="1" y="1" width="11" height="11" fill="#111" stroke="#e0e0e0" stroke-width="1.6"/></svg><svg style="left:46px;top:1468px;" width="22" height="22" viewBox="0 0 22 22"><path d="M3 7 H15 V17" fill="none" stroke="#dcdcdc" stroke-width="2"/><path d="M0 7 L5 2 V12Z M15 20 L10 15 H20Z" fill="#dcdcdc"/></svg><div style="left:30px;top:1523px;width:42px;height:42px;background:#fff;border:1.5px solid #222"></div><div style="left:10px;top:1502px;width:40px;height:41px;background:#000;border:2px solid #e8e8e8"></div><svg style="left:20px;top:1589px;" width="42" height="32" viewBox="0 0 42 32"><rect x="2" y="2" width="38" height="28" fill="none" stroke="#dcdcdc" stroke-width="2.6"/><circle cx="21" cy="16" r="8" fill="none" stroke="#dcdcdc" stroke-width="2.4" stroke-dasharray="2.5 2.5"/></svg><svg style="left:20px;top:1643px;" width="42" height="34" viewBox="0 0 42 34"><rect x="2" y="11" width="28" height="21" fill="#535353" stroke="#dcdcdc" stroke-width="2.4"/><rect x="12" y="2" width="28" height="21" fill="#535353" stroke="#dcdcdc" stroke-width="2.4"/></svg><svg style="left:63px;top:1672px;" width="8" height="8" viewBox="0 0 8 8"><path d="M8 0 L8 8 L0 8Z" fill="#c8c8c8"/></svg><svg style="left:3266px;top:170px;" width="16" height="14" viewBox="0 0 16 14"><path d="M7.5 2 L3 7 L7.5 12 M14 2 L9.5 7 L14 12" fill="none" stroke="#cfcfcf" stroke-width="1.8"/></svg><svg style="left:3812px;top:170px;" width="16" height="14" viewBox="0 0 16 14"><path d="M2 2 L6.5 7 L2 12 M8.5 2 L13 7 L8.5 12" fill="none" stroke="#cfcfcf" stroke-width="1.8"/></svg><svg style="left:3240px;top:195px;" width="36" height="8" viewBox="0 0 36 8"><rect x="0" y="0" width="2" height="8" fill="#3c3c3c"/><rect x="4" y="0" width="2" height="8" fill="#3c3c3c"/><rect x="8" y="0" width="2" height="8" fill="#3c3c3c"/><rect x="12" y="0" width="2" height="8" fill="#3c3c3c"/><rect x="16" y="0" width="2" height="8" fill="#3c3c3c"/><rect x="20" y="0" width="2" height="8" fill="#3c3c3c"/><rect x="24" y="0" width="2" height="8" fill="#3c3c3c"/><rect x="28" y="0" width="2" height="8" fill="#3c3c3c"/><rect x="32" y="0" width="2" height="8" fill="#3c3c3c"/></svg><svg style="left:3240px;top:324px;" width="36" height="8" viewBox="0 0 36 8"><rect x="0" y="0" width="2" height="8" fill="#3c3c3c"/><rect x="4" y="0" width="2" height="8" fill="#3c3c3c"/><rect x="8" y="0" width="2" height="8" fill="#3c3c3c"/><rect x="12" y="0" width="2" height="8" fill="#3c3c3c"/><rect x="16" y="0" width="2" height="8" fill="#3c3c3c"/><rect x="20" y="0" width="2" height="8" fill="#3c3c3c"/><rect x="24" y="0" width="2" height="8" fill="#3c3c3c"/><rect x="28" y="0" width="2" height="8" fill="#3c3c3c"/><rect x="32" y="0" width="2" height="8" fill="#3c3c3c"/></svg><svg style="left:3240px;top:453px;" width="36" height="8" viewBox="0 0 36 8"><rect x="0" y="0" width="2" height="8" fill="#3c3c3c"/><rect x="4" y="0" width="2" height="8" fill="#3c3c3c"/><rect x="8" y="0" width="2" height="8" fill="#3c3c3c"/><rect x="12" y="0" width="2" height="8" fill="#3c3c3c"/><rect x="16" y="0" width="2" height="8" fill="#3c3c3c"/><rect x="20" y="0" width="2" height="8" fill="#3c3c3c"/><rect x="24" y="0" width="2" height="8" fill="#3c3c3c"/><rect x="28" y="0" width="2" height="8" fill="#3c3c3c"/><rect x="32" y="0" width="2" height="8" fill="#3c3c3c"/></svg><svg style="left:3242px;top:213px;" width="32" height="36" viewBox="0 0 32 36"><rect x="2" y="2" width="8" height="8" fill="none" stroke="#dcdcdc" stroke-width="2"/><rect x="2" y="13" width="8" height="8" fill="none" stroke="#dcdcdc" stroke-width="2"/><rect x="1" y="24" width="10" height="11" fill="#dcdcdc"/><path d="M18 30 Q28 24 24 8" fill="none" stroke="#dcdcdc" stroke-width="3"/><path d="M24 3 L30 11 L19 10Z" fill="#dcdcdc"/></svg><div style="left:3232px;top:264px;width:51px;height:41px;background:#333333;border-radius:4px;border:1px solid #4a4a4a"></div><svg style="left:3245px;top:271px;" width="26" height="28" viewBox="0 0 26 28"><path d="M3 2 L24 14 L3 26Z" fill="#dcdcdc"/></svg><svg style="left:3238px;top:343px;" width="42" height="36" viewBox="0 0 42 36"><rect x="2" y="2" width="5" height="4" fill="#dcdcdc"/><rect x="2" y="9" width="5" height="4" fill="#dcdcdc"/><rect x="2" y="16" width="5" height="4" fill="#dcdcdc"/><rect x="9" y="3" width="10" height="2" fill="#dcdcdc"/><rect x="9" y="10" width="10" height="2" fill="#dcdcdc"/><rect x="9" y="17" width="10" height="2" fill="#dcdcdc"/><path d="M40 5 L22 24 L26 27Z" fill="#dcdcdc"/><path d="M20 25 Q12 25 11 32 L7 35 Q20 37 24 29Z" fill="#dcdcdc"/></svg><svg style="left:3236px;top:398px;" width="44" height="34" viewBox="0 0 44 34"><path d="M2 7 Q10 0 18 4 L18 10 Q10 14 2 7Z" fill="#dcdcdc"/><rect x="20" y="5" width="22" height="4" rx="2" fill="#dcdcdc"/><rect x="5" y="21" width="20" height="4" rx="2" fill="#dcdcdc"/><path d="M27 23 L40 13 Q44 22 40 32Z" fill="#dcdcdc"/></svg><svg style="left:3243px;top:475px;" width="28" height="31" viewBox="0 0 28 31"><rect x="1" y="1" width="26" height="29" rx="2" fill="#dcdcdc"/><rect x="5" y="6" width="8" height="2" fill="#535353"/><rect x="5" y="10" width="8" height="2" fill="#535353"/><rect x="5" y="14" width="8" height="2" fill="#535353"/><rect x="15" y="6" width="8" height="10" fill="#535353"/><rect x="5" y="20" width="18" height="5" fill="#535353"/></svg><svg style="left:3243px;top:526px;" width="28" height="31" viewBox="0 0 28 31"><path d="M1 1 H27 V20 L18 30 H1Z" fill="#dcdcdc"/><rect x="6" y="7" width="15" height="2" fill="#535353"/><rect x="6" y="12" width="15" height="2" fill="#535353"/><rect x="6" y="17" width="10" height="2" fill="#535353"/><path d="M19 29 L19 21 L27 21" fill="none" stroke="#535353" stroke-width="2"/></svg><svg style="left:3145px;top:209px;" width="20" height="16" viewBox="0 0 20 16"><path d="M2 2 L8 8 L2 14 M10 2 L16 8 L10 14" fill="none" stroke="#dcdcdc" stroke-width="2.2"/></svg><div style="left:3176px;top:206px;width:2px;height:22px;background:#9a9a9a;"></div><svg style="left:3191px;top:210px;" width="20" height="15" viewBox="0 0 20 15"><rect x="0" y="0" width="20" height="2" fill="#c8c8c8"/><rect x="0" y="4" width="20" height="2" fill="#c8c8c8"/><rect x="0" y="8" width="20" height="2" fill="#c8c8c8"/><rect x="0" y="12" width="20" height="2" fill="#c8c8c8"/></svg><svg style="left:2744px;top:258.0px;" width="20" height="17" viewBox="0 0 20 17"><path d="M2 8.5 L7 13.5 L17 3" fill="none" stroke="#d8d8d8" stroke-width="3.2"/></svg><svg style="left:2781px;top:259.0px;" width="23" height="24" viewBox="0 0 23 24"><rect x="1.2" y="1.2" width="20.6" height="21.6" fill="none" stroke="#dcdcdc" stroke-width="2.2"/><rect x="1" y="5" width="21" height="2" fill="#dcdcdc"/><rect x="6" y="13" width="11" height="2.2" fill="#dcdcdc"/></svg><svg style="left:2744px;top:301.5px;" width="20" height="17" viewBox="0 0 20 17"><path d="M2 8.5 L7 13.5 L17 3" fill="none" stroke="#d8d8d8" stroke-width="3.2"/></svg><svg style="left:2780px;top:304px;" width="25" height="22" viewBox="0 0 25 22"><rect x="1" y="1" width="23" height="20" fill="none" stroke="#464646" stroke-width="2"/></svg><svg style="left:2744px;top:344.8px;" width="20" height="17" viewBox="0 0 20 17"><path d="M2 8.5 L7 13.5 L17 3" fill="none" stroke="#d8d8d8" stroke-width="3.2"/></svg><svg style="left:2780px;top:347.3px;" width="25" height="22" viewBox="0 0 25 22"><rect x="1" y="1" width="23" height="20" fill="none" stroke="#464646" stroke-width="2"/></svg><svg style="left:2744px;top:388.1px;" width="20" height="17" viewBox="0 0 20 17"><path d="M2 8.5 L7 13.5 L17 3" fill="none" stroke="#d8d8d8" stroke-width="3.2"/></svg><svg style="left:2780px;top:390.6px;" width="25" height="22" viewBox="0 0 25 22"><rect x="1" y="1" width="23" height="20" fill="none" stroke="#464646" stroke-width="2"/></svg><svg style="left:2744px;top:431.5px;" width="20" height="17" viewBox="0 0 20 17"><path d="M2 8.5 L7 13.5 L17 3" fill="none" stroke="#d8d8d8" stroke-width="3.2"/></svg><svg style="left:2780px;top:434px;" width="25" height="22" viewBox="0 0 25 22"><rect x="1" y="1" width="23" height="20" fill="none" stroke="#464646" stroke-width="2"/></svg><svg style="left:2744px;top:474.8px;" width="20" height="17" viewBox="0 0 20 17"><path d="M2 8.5 L7 13.5 L17 3" fill="none" stroke="#d8d8d8" stroke-width="3.2"/></svg><svg style="left:2780px;top:477.3px;" width="25" height="22" viewBox="0 0 25 22"><rect x="1" y="1" width="23" height="20" fill="none" stroke="#464646" stroke-width="2"/></svg><svg style="left:2823px;top:263.0px;" width="10" height="17" viewBox="0 0 10 17"><path d="M1.5 1 L8 8.5 L1.5 16.0" fill="none" stroke="#dcdcdc" stroke-width="1.8"/></svg><svg style="left:2823px;top:306.5px;" width="10" height="17" viewBox="0 0 10 17"><path d="M1.5 1 L8 8.5 L1.5 16.0" fill="none" stroke="#dcdcdc" stroke-width="1.8"/></svg><svg style="left:2821px;top:353.3px;" width="16" height="10" viewBox="0 0 16 10"><path d="M1 1.5 L8.0 8.5 L15.0 1.5" fill="none" stroke="#dcdcdc" stroke-width="1.8"/></svg><svg style="left:2821px;top:440px;" width="16" height="10" viewBox="0 0 16 10"><path d="M1 1.5 L8.0 8.5 L15.0 1.5" fill="none" stroke="#dcdcdc" stroke-width="1.8"/></svg><svg style="left:2854px;top:393.1px;" width="10" height="17" viewBox="0 0 10 17"><path d="M1.5 1 L8 8.5 L1.5 16.0" fill="none" stroke="#dcdcdc" stroke-width="1.8"/></svg><svg style="left:2854px;top:479.8px;" width="10" height="17" viewBox="0 0 10 17"><path d="M1.5 1 L8 8.5 L1.5 16.0" fill="none" stroke="#dcdcdc" stroke-width="1.8"/></svg><svg style="left:2851.5px;top:259.5px;" width="27" height="22" viewBox="0 0 27 22"><path d="M2 1 H10 Q11 1 11.5 2.5 H25 Q26 2.5 26 4.5 V20 Q26 21 25 21 H2 Q1 21 1 20 V3Q1 1 2 1Z" fill="#dcdcdc"/><rect x="1" y="4" width="10" height="1.3" fill="#535353"/></svg><svg style="left:2851.5px;top:303.0px;" width="27" height="22" viewBox="0 0 27 22"><path d="M2 1 H10 Q11 1 11.5 2.5 H25 Q26 2.5 26 4.5 V20 Q26 21 25 21 H2 Q1 21 1 20 V3Q1 1 2 1Z" fill="#dcdcdc"/><rect x="1" y="4" width="10" height="1.3" fill="#535353"/></svg><svg style="left:2851.5px;top:346.3px;" width="27" height="22" viewBox="0 0 27 22"><path d="M1 1 H10 L12 5 H26 V21 H1Z" fill="#dcdcdc"/><path d="M3 3.2 H9 L10.5 6.5 H24 V9.5 H3Z" fill="#535353"/></svg><svg style="left:2851.5px;top:433.0px;" width="27" height="22" viewBox="0 0 27 22"><path d="M1 1 H10 L12 5 H26 V21 H1Z" fill="#dcdcdc"/><path d="M3 3.2 H9 L10.5 6.5 H24 V9.5 H3Z" fill="#535353"/></svg><svg style="left:2818px;top:636px;" width="16" height="16" viewBox="0 0 16 16"><rect width="16" height="16" fill="#8e8e8e"/></svg><svg style="left:2878px;top:634px;" width="20" height="20" viewBox="0 0 20 20"><circle cx="10" cy="10" r="9.5" fill="#dcdcdc"/></svg><svg style="left:2944px;top:635px;" width="20" height="19" viewBox="0 0 20 19"><path d="M1 1 L19 9.5 L1 18Z" fill="#dcdcdc"/></svg><svg style="left:2999px;top:633.0px;" width="28" height="22" viewBox="0 0 28 22"><path d="M2 1 H10 Q11 1 11.5 2.5 H26 Q27 2.5 27 4.5 V20 Q27 21 26 21 H2 Q1 21 1 20 V3Q1 1 2 1Z" fill="#dcdcdc"/><rect x="1" y="4" width="10" height="1.3" fill="#535353"/></svg><svg style="left:3070px;top:632px;" width="25" height="25" viewBox="0 0 25 25"><rect x="1.2" y="1.2" width="22.6" height="22.6" fill="none" stroke="#dcdcdc" stroke-width="2.4"/><path d="M12.5 6.5 V18.5 M6.5 12.5 H18.5" stroke="#dcdcdc" stroke-width="2.2"/></svg><svg style="left:3133px;top:631px;" width="24" height="27" viewBox="0 0 24 27"><rect x="0" y="4" width="24" height="2.4" fill="#dcdcdc"/><rect x="8" y="0" width="8" height="2.4" fill="#dcdcdc"/><path d="M3 7 V25 H21 V7" fill="none" stroke="#dcdcdc" stroke-width="2.4"/><path d="M8.5 10 V23 M12 10 V23 M15.5 10 V23" stroke="#dcdcdc" stroke-width="2"/></svg><svg style="left:2955px;top:672px;" width="40" height="8" viewBox="0 0 40 8"><rect x="0" y="0" width="2" height="8" fill="#3e3e3e"/><rect x="4" y="0" width="2" height="8" fill="#3e3e3e"/><rect x="8" y="0" width="2" height="8" fill="#3e3e3e"/><rect x="12" y="0" width="2" height="8" fill="#3e3e3e"/><rect x="16" y="0" width="2" height="8" fill="#3e3e3e"/><rect x="20" y="0" width="2" height="8" fill="#3e3e3e"/><rect x="24" y="0" width="2" height="8" fill="#3e3e3e"/><rect x="28" y="0" width="2" height="8" fill="#3e3e3e"/><rect x="32" y="0" width="2" height="8" fill="#3e3e3e"/><rect x="36" y="0" width="2" height="8" fill="#3e3e3e"/></svg><svg style="left:3810px;top:209px;" width="20" height="15" viewBox="0 0 20 15"><rect x="0" y="0" width="20" height="2" fill="#c8c8c8"/><rect x="0" y="4" width="20" height="2" fill="#c8c8c8"/><rect x="0" y="8" width="20" height="2" fill="#c8c8c8"/><rect x="0" y="12" width="20" height="2" fill="#c8c8c8"/></svg><div style="left:3312.4px;top:260px;width:30.6px;height:31px;background:#fff;"></div><div style="left:3346.2000000000003px;top:260px;width:30.6px;height:31px;background:#fff;"></div><div style="left:3380.0px;top:260px;width:30.6px;height:31px;background:#fff;"></div><div style="left:3413.8px;top:260px;width:30.6px;height:31px;background:#000;"></div><div style="left:3447.6px;top:260px;width:30.6px;height:31px;background:#000;"></div><div style="left:3481.4px;top:260px;width:30.6px;height:31px;background:#fff;"></div><div style="left:3515.2000000000003px;top:260px;width:30.6px;height:31px;background:#e8f04f;"></div><div style="left:3549.0px;top:260px;width:30.6px;height:31px;background:#2e46c0;"></div><div style="left:3582.8px;top:260px;width:30.6px;height:31px;background:#000;"></div><div style="left:3616.6px;top:260px;width:30.6px;height:31px;background:#fff;"></div><div style="left:3650.4px;top:260px;width:30.6px;height:31px;background:#000;"></div><div style="left:3684.2px;top:260px;width:30.6px;height:31px;background:#6b5e3a;"></div><div style="left:3718.0px;top:260px;width:30.6px;height:31px;background:#e5603a;"></div><div style="left:3751.8px;top:260px;width:30.6px;height:31px;background:#fff;"></div><div style="left:3785.6px;top:260px;width:30.6px;height:31px;background:#06af4e;"></div><svg style="left:3315px;top:329.0px;" width="10" height="16" viewBox="0 0 10 16"><path d="M1.5 1 L8 8.0 L1.5 15.0" fill="none" stroke="#dcdcdc" stroke-width="1.8"/></svg><svg style="left:3337px;top:325.0px;" width="27" height="22" viewBox="0 0 27 22"><path d="M2 1 H10 Q11 1 11.5 2.5 H25 Q26 2.5 26 4.5 V20 Q26 21 25 21 H2 Q1 21 1 20 V3Q1 1 2 1Z" fill="#dcdcdc"/><rect x="1" y="4" width="10" height="1.3" fill="#535353"/></svg><div style="left:3297px;top:362.0px;width:510px;height:1px;background:#474747;"></div><svg style="left:3315px;top:383.3px;" width="10" height="16" viewBox="0 0 10 16"><path d="M1.5 1 L8 8.0 L1.5 15.0" fill="none" stroke="#dcdcdc" stroke-width="1.8"/></svg><svg style="left:3337px;top:379.3px;" width="27" height="22" viewBox="0 0 27 22"><path d="M2 1 H10 Q11 1 11.5 2.5 H25 Q26 2.5 26 4.5 V20 Q26 21 25 21 H2 Q1 21 1 20 V3Q1 1 2 1Z" fill="#dcdcdc"/><rect x="1" y="4" width="10" height="1.3" fill="#535353"/></svg><div style="left:3297px;top:416.3px;width:510px;height:1px;background:#474747;"></div><svg style="left:3315px;top:437.6px;" width="10" height="16" viewBox="0 0 10 16"><path d="M1.5 1 L8 8.0 L1.5 15.0" fill="none" stroke="#dcdcdc" stroke-width="1.8"/></svg><svg style="left:3337px;top:433.6px;" width="27" height="22" viewBox="0 0 27 22"><path d="M2 1 H10 Q11 1 11.5 2.5 H25 Q26 2.5 26 4.5 V20 Q26 21 25 21 H2 Q1 21 1 20 V3Q1 1 2 1Z" fill="#dcdcdc"/><rect x="1" y="4" width="10" height="1.3" fill="#535353"/></svg><div style="left:3297px;top:470.6px;width:510px;height:1px;background:#474747;"></div><svg style="left:3315px;top:491.9px;" width="10" height="16" viewBox="0 0 10 16"><path d="M1.5 1 L8 8.0 L1.5 15.0" fill="none" stroke="#dcdcdc" stroke-width="1.8"/></svg><svg style="left:3337px;top:487.9px;" width="27" height="22" viewBox="0 0 27 22"><path d="M2 1 H10 Q11 1 11.5 2.5 H25 Q26 2.5 26 4.5 V20 Q26 21 25 21 H2 Q1 21 1 20 V3Q1 1 2 1Z" fill="#dcdcdc"/><rect x="1" y="4" width="10" height="1.3" fill="#535353"/></svg><div style="left:3297px;top:524.9px;width:510px;height:1px;background:#474747;"></div><svg style="left:3315px;top:546.2px;" width="10" height="16" viewBox="0 0 10 16"><path d="M1.5 1 L8 8.0 L1.5 15.0" fill="none" stroke="#dcdcdc" stroke-width="1.8"/></svg><svg style="left:3337px;top:542.2px;" width="27" height="22" viewBox="0 0 27 22"><path d="M2 1 H10 Q11 1 11.5 2.5 H25 Q26 2.5 26 4.5 V20 Q26 21 25 21 H2 Q1 21 1 20 V3Q1 1 2 1Z" fill="#dcdcdc"/><rect x="1" y="4" width="10" height="1.3" fill="#535353"/></svg><div style="left:3297px;top:579.2px;width:510px;height:1px;background:#474747;"></div><svg style="left:3315px;top:600.5px;" width="10" height="16" viewBox="0 0 10 16"><path d="M1.5 1 L8 8.0 L1.5 15.0" fill="none" stroke="#dcdcdc" stroke-width="1.8"/></svg><svg style="left:3337px;top:596.5px;" width="27" height="22" viewBox="0 0 27 22"><path d="M2 1 H10 Q11 1 11.5 2.5 H25 Q26 2.5 26 4.5 V20 Q26 21 25 21 H2 Q1 21 1 20 V3Q1 1 2 1Z" fill="#dcdcdc"/><rect x="1" y="4" width="10" height="1.3" fill="#535353"/></svg><svg style="left:3627px;top:654.5px;" width="28" height="23" viewBox="0 0 28 23"><path d="M2 1 H10 Q11 1 11.5 2.5 H26 Q27 2.5 27 4.5 V21 Q27 22 26 22 H2 Q1 22 1 21 V3Q1 1 2 1Z" fill="#dcdcdc"/><rect x="1" y="4" width="10" height="1.3" fill="#535353"/></svg><svg style="left:3690px;top:654px;" width="25" height="25" viewBox="0 0 25 25"><rect x="1.2" y="1.2" width="22.6" height="22.6" fill="none" stroke="#dcdcdc" stroke-width="2.4"/><path d="M12.5 6.5 V18.5 M6.5 12.5 H18.5" stroke="#dcdcdc" stroke-width="2.2"/></svg><svg style="left:3754px;top:653px;" width="24" height="26" viewBox="0 0 24 26"><rect x="0" y="4" width="24" height="2.4" fill="#8a8a8a"/><rect x="8" y="0" width="8" height="2.4" fill="#8a8a8a"/><path d="M3 7 V24 H21 V7" fill="none" stroke="#8a8a8a" stroke-width="2.4"/><path d="M8.5 10 V22 M12 10 V22 M15.5 10 V22" stroke="#8a8a8a" stroke-width="2"/></svg><svg style="left:3810px;top:718px;" width="20" height="15" viewBox="0 0 20 15"><rect x="0" y="0" width="20" height="2" fill="#c8c8c8"/><rect x="0" y="4" width="20" height="2" fill="#c8c8c8"/><rect x="0" y="8" width="20" height="2" fill="#c8c8c8"/><rect x="0" y="12" width="20" height="2" fill="#c8c8c8"/></svg><svg style="left:3421px;top:840px;" width="36" height="36" viewBox="0 0 36 36"><circle cx="18" cy="18" r="8" fill="none" stroke="#d0d0d0" stroke-width="2.2"/><path d="M18 10 A8 8 0 0 0 18 26Z" fill="#d0d0d0"/><rect x="17" y="0" width="2.2" height="5" fill="#d0d0d0" transform="rotate(0 18 18)"/><rect x="17" y="0" width="2.2" height="5" fill="#d0d0d0" transform="rotate(45 18 18)"/><rect x="17" y="0" width="2.2" height="5" fill="#d0d0d0" transform="rotate(90 18 18)"/><rect x="17" y="0" width="2.2" height="5" fill="#d0d0d0" transform="rotate(135 18 18)"/><rect x="17" y="0" width="2.2" height="5" fill="#d0d0d0" transform="rotate(180 18 18)"/><rect x="17" y="0" width="2.2" height="5" fill="#d0d0d0" transform="rotate(225 18 18)"/><rect x="17" y="0" width="2.2" height="5" fill="#d0d0d0" transform="rotate(270 18 18)"/><rect x="17" y="0" width="2.2" height="5" fill="#d0d0d0" transform="rotate(315 18 18)"/></svg><svg style="left:3466px;top:840px;" width="36" height="36" viewBox="0 0 36 36"><path d="M1 34 V22 L3 24 L5 18 L7 22 L9 14 L11 20 L13 10 L15 18 L17 6 L19 16 L21 10 L23 20 L25 12 L27 22 L29 16 L31 24 L33 20 L35 26 V34Z" fill="#d0d0d0"/></svg><svg style="left:3511px;top:840px;" width="36" height="36" viewBox="0 0 36 36"><rect x="2" y="2" width="32" height="32" fill="none" stroke="#9a9a9a" stroke-width="1.5"/><path d="M2 13 H34 M2 23 H34 M13 2 V34 M23 2 V34" stroke="#8a8a8a" stroke-width="1.2"/><path d="M3 33 Q14 33 18 18 Q22 3 33 3" fill="none" stroke="#d0d0d0" stroke-width="2"/></svg><svg style="left:3556px;top:840px;" width="36" height="36" viewBox="0 0 36 36"><rect x="1.5" y="2" width="33" height="32" fill="none" stroke="#d0d0d0" stroke-width="2.2"/><path d="M2 33 L34 3" stroke="#d0d0d0" stroke-width="2"/><path d="M34 3 V33 H2Z" fill="#d0d0d0"/><path d="M6 10 H14 M10 6 V14" stroke="#d0d0d0" stroke-width="2"/><path d="M21 25 H30" stroke="#535353" stroke-width="2.2"/></svg><svg style="left:3601px;top:840px;" width="36" height="36" viewBox="0 0 36 36"><defs><radialGradient id="vg"><stop offset="0" stop-color="#666"/><stop offset="1" stop-color="#9a9a9a"/></radialGradient></defs><path d="M3 5 H33 L18 33Z" fill="url(#vg)" stroke="#d0d0d0" stroke-width="2.2" stroke-linejoin="round"/></svg><svg style="left:3399px;top:893px;" width="36" height="36" viewBox="0 0 36 36"><defs><linearGradient id="hg" x1="0" x2="1"><stop offset="0" stop-color="#222"/><stop offset="1" stop-color="#ddd"/></linearGradient></defs><rect x="1" y="4" width="34" height="28" fill="url(#hg)" stroke="#d0d0d0" stroke-width="2"/><rect x="6" y="6" width="2" height="11" fill="#eee"/><rect x="10" y="6" width="2" height="11" fill="#eee"/><rect x="14" y="6" width="2" height="11" fill="#eee"/><rect x="18" y="6" width="2" height="11" fill="#eee"/><rect x="22" y="6" width="2" height="11" fill="#eee"/><rect x="26" y="6" width="2" height="11" fill="#eee"/><rect x="30" y="6" width="2" height="11" fill="#eee"/></svg><svg style="left:3443px;top:893px;" width="36" height="36" viewBox="0 0 36 36"><path d="M18 6 V30 M6 10 H30" stroke="#d0d0d0" stroke-width="2"/><circle cx="18" cy="6" r="3" fill="none" stroke="#d0d0d0" stroke-width="2"/><path d="M1 24 A6.5 6 0 0 0 14 24Z M22 24 A6.5 6 0 0 0 35 24Z" fill="#d0d0d0"/><path d="M6 10 L1 24 M6 10 L13 24 M30 10 L22 24 M30 10 L35 24" stroke="#d0d0d0" stroke-width="1.6" fill="none"/></svg><svg style="left:3487px;top:893px;" width="36" height="36" viewBox="0 0 36 36"><rect x="2" y="3" width="32" height="30" fill="none" stroke="#d0d0d0" stroke-width="2.4"/><rect x="17" y="3" width="17" height="30" fill="#d0d0d0"/></svg><svg style="left:3531px;top:893px;" width="36" height="36" viewBox="0 0 36 36"><path d="M2 10 H8 L11 5 H21 L24 10 H32 V28 H2Z" fill="#d0d0d0"/><circle cx="17" cy="18" r="6" fill="#535353"/><circle cx="17" cy="18" r="4" fill="#d0d0d0"/><circle cx="28" cy="27" r="7" fill="#535353" stroke="#d0d0d0" stroke-width="2.4"/></svg><svg style="left:3575px;top:893px;" width="36" height="36" viewBox="0 0 36 36"><circle cx="18" cy="12" r="10" fill="#9a9a9a"/><circle cx="11" cy="24" r="10" fill="#bdbdbd" fill-opacity="0.85"/><circle cx="25" cy="24" r="10" fill="#d6d6d6" fill-opacity="0.8"/><path d="M18 18 L14 24 H22Z" fill="#444"/></svg><svg style="left:3619px;top:893px;" width="36" height="36" viewBox="0 0 36 36"><rect x="1.5" y="4" width="33" height="28" fill="none" stroke="#d0d0d0" stroke-width="2.2"/><path d="M1.5 13.5 H34.5 M1.5 22.5 H34.5 M12.5 4 V32 M23.5 4 V32" stroke="#d0d0d0" stroke-width="2"/><rect x="3" y="24" width="8" height="7" fill="#333"/><rect x="14" y="24" width="8" height="7" fill="#333"/><rect x="25" y="24" width="8" height="7" fill="#333"/><rect x="3" y="15" width="8" height="6" fill="#444"/><rect x="3" y="5" width="8" height="7" fill="#888"/></svg><svg style="left:3421px;top:942px;" width="36" height="36" viewBox="0 0 36 36"><rect x="2" y="2" width="32" height="32" fill="#d0d0d0"/><rect x="4" y="4" width="28" height="28" fill="#535353"/><path d="M8 30 Q18 4 30 6" fill="none" stroke="#d0d0d0" stroke-width="2.2"/><ellipse cx="19" cy="18" rx="7" ry="11" transform="rotate(40 19 18)" fill="#d0d0d0"/></svg><svg style="left:3466px;top:942px;" width="36" height="36" viewBox="0 0 36 36"><defs><linearGradient id="gm" x1="0" y1="1" x2="1" y2="0"><stop offset="0" stop-color="#8a8a8a"/><stop offset="0.25" stop-color="#c0c0c0"/><stop offset="0.5" stop-color="#7a7a7a"/><stop offset="0.75" stop-color="#c8c8c8"/><stop offset="1" stop-color="#8a8a8a"/></linearGradient></defs><rect x="2" y="2" width="32" height="32" fill="url(#gm)" stroke="#d0d0d0" stroke-width="2"/></svg><svg style="left:3511px;top:942px;" width="36" height="36" viewBox="0 0 36 36"><rect x="2" y="2" width="32" height="32" fill="#d0d0d0"/><path d="M4 30 H10 V24 H16 V18 H22 V12 H28 V6 H32" fill="none" stroke="#535353" stroke-width="3"/><path d="M4 22 H10 V16 H16" fill="none" stroke="#535353" stroke-width="2.4"/></svg><svg style="left:3556px;top:942px;" width="36" height="36" viewBox="0 0 36 36"><rect x="2" y="2" width="32" height="32" fill="#a0a0a0" stroke="#d0d0d0" stroke-width="2"/><path d="M2 2 L18 18 L34 2Z M2 34 L18 18 L34 34Z" fill="#d0d0d0"/></svg><svg style="left:3601px;top:942px;" width="36" height="36" viewBox="0 0 36 36"><defs><linearGradient id="gmp" x1="0" x2="1"><stop offset="0" stop-color="#222"/><stop offset="1" stop-color="#e0e0e0"/></linearGradient></defs><rect x="2" y="2" width="32" height="32" fill="url(#gmp)" stroke="#d0d0d0" stroke-width="2"/></svg><svg style="left:3810px;top:1249px;" width="20" height="15" viewBox="0 0 20 15"><rect x="0" y="0" width="20" height="2" fill="#c8c8c8"/><rect x="0" y="4" width="20" height="2" fill="#c8c8c8"/><rect x="0" y="8" width="20" height="2" fill="#c8c8c8"/><rect x="0" y="12" width="20" height="2" fill="#c8c8c8"/></svg><div style="left:3305px;top:1298px;width:187px;height:40px;background:#424242;border:1.5px solid #5c5c5c;border-radius:5px"></div><svg style="left:3320px;top:1308px;" width="22" height="22" viewBox="0 0 22 22"><circle cx="8.5" cy="8.5" r="6" fill="none" stroke="#dcdcdc" stroke-width="2.4"/><line x1="13" y1="13" x2="20" y2="20" stroke="#dcdcdc" stroke-width="3" stroke-linecap="round"/></svg><svg style="left:3470px;top:1315px;" width="16" height="10" viewBox="0 0 16 10"><path d="M1 1.5 L8.0 8.5 L15.0 1.5" fill="none" stroke="#dcdcdc" stroke-width="1.8"/></svg><svg style="left:3519px;top:1302px;" width="29" height="24" viewBox="0 0 29 24"><rect x="1.2" y="1.2" width="26.6" height="21.6" fill="none" stroke="#dcdcdc" stroke-width="2.4"/><path d="M5 19 L11 10 L15 15 L18 12 L24 19Z" fill="#dcdcdc"/></svg><svg style="left:3564px;top:1302px;" width="27" height="27" viewBox="0 0 27 27"><circle cx="13.5" cy="13.5" r="11.5" fill="none" stroke="#dcdcdc" stroke-width="2.4"/><path d="M21.6 5.4 A11.5 11.5 0 0 1 5.4 21.6Z" fill="#dcdcdc"/></svg><svg style="left:3611px;top:1302px;" width="24" height="25" viewBox="0 0 24 25"><path d="M1 1 H23 V7 H20 V4 H14 V21 H17 V24 H7 V21 H10 V4 H4 V7 H1Z" fill="#dcdcdc"/></svg><svg style="left:3655px;top:1302px;" width="27" height="26" viewBox="0 0 27 26"><rect x="4" y="4" width="19" height="18" fill="none" stroke="#dcdcdc" stroke-width="2.2"/><rect x="1" y="1" width="6" height="6" fill="#535353" stroke="#dcdcdc" stroke-width="1.8"/><rect x="20" y="1" width="6" height="6" fill="#535353" stroke="#dcdcdc" stroke-width="1.8"/><rect x="1" y="19" width="6" height="6" fill="#535353" stroke="#dcdcdc" stroke-width="1.8"/><rect x="20" y="19" width="6" height="6" fill="#535353" stroke="#dcdcdc" stroke-width="1.8"/></svg><svg style="left:3702px;top:1302px;" width="26" height="26" viewBox="0 0 26 26"><path d="M9 1 H19 L25 7 V19 H9Z" fill="none" stroke="#dcdcdc" stroke-width="2.2"/><rect x="1" y="12" width="14" height="13" fill="#dcdcdc"/></svg><svg style="left:3753px;top:1300px;" width="19" height="38" viewBox="0 0 19 38"><rect x="1" y="1" width="17" height="36" rx="8.5" fill="#4a4a4a" stroke="#5e5e5e" stroke-width="1.5"/><circle cx="9.5" cy="9.5" r="8" fill="#e8e8e8"/></svg><div style="left:3305px;top:1354.5px;width:251px;height:40px;background:#424242;border:1.5px solid #5c5c5c;border-radius:5px"></div><svg style="left:3534px;top:1371px;" width="16" height="10" viewBox="0 0 16 10"><path d="M1 1.5 L8.0 8.5 L15.0 1.5" fill="none" stroke="#dcdcdc" stroke-width="1.8"/></svg><div style="left:3657px;top:1354.5px;width:112px;height:38px;background:#424242;border:1.5px solid #5c5c5c;border-radius:5px"></div><div style="left:3741px;top:1356.5px;width:2px;height:34px;background:#5a5a5a;"></div><svg style="left:3748px;top:1369.5px;" width="16" height="10" viewBox="0 0 16 10"><path d="M1 1.5 L8.0 8.5 L15.0 1.5" fill="none" stroke="#dcdcdc" stroke-width="1.8"/></svg><div style="left:3657px;top:1411px;width:112px;height:38px;background:#424242;border:1.5px solid #5c5c5c;border-radius:5px"></div><div style="left:3741px;top:1413px;width:2px;height:34px;background:#5a5a5a;"></div><svg style="left:3748px;top:1426px;" width="16" height="10" viewBox="0 0 16 10"><path d="M1 1.5 L8.0 8.5 L15.0 1.5" fill="none" stroke="#dcdcdc" stroke-width="1.8"/></svg><svg style="left:3375px;top:1416px;" width="26" height="26" viewBox="0 0 26 26"><rect x="1.2" y="1.2" width="23.6" height="23.6" fill="none" stroke="#dcdcdc" stroke-width="2.4"/><rect x="1" y="1" width="8" height="8" fill="#dcdcdc"/><rect x="17" y="1" width="8" height="8" fill="#dcdcdc"/><rect x="9" y="9" width="8" height="8" fill="#dcdcdc"/><rect x="1" y="17" width="8" height="8" fill="#dcdcdc"/><rect x="17" y="17" width="8" height="8" fill="#dcdcdc"/></svg><svg style="left:3416px;top:1415px;" width="29" height="32" viewBox="0 0 29 32"><path d="M28 1 L12 21 L15 24Z" fill="#dcdcdc"/><path d="M10 22 Q4 23 3 29 L1 31 Q12 32 14 25Z" fill="#dcdcdc"/></svg><svg style="left:3454px;top:1415px;" width="29" height="29" viewBox="0 0 29 29"><path d="M14.5 1 L19 6 H16 V13 H23 V10 L28 14.5 L23 19 V16 H16 V23 H19 L14.5 28 L10 23 H13 V16 H6 V19 L1 14.5 L6 10 V13 H13 V6 H10Z" fill="#dcdcdc"/></svg><svg style="left:3495px;top:1414px;" width="32" height="31" viewBox="0 0 32 31"><path d="M7 8 H20 L25 13 V25 H7Z" fill="none" stroke="#dcdcdc" stroke-width="2.2"/><path d="M1 6 H4 M7 1 V4 M28 8 V11 M26 6 H31 M1 28 H4 M7 28 V31 M28 25 V31 M25 28 H31" stroke="#dcdcdc" stroke-width="2.2"/></svg><svg style="left:3540px;top:1414px;" width="25" height="32" viewBox="0 0 25 32"><path d="M6 13 V9 A6.5 6.5 0 0 1 19 9 V13" fill="none" stroke="#dcdcdc" stroke-width="3"/><rect x="2" y="13" width="21" height="17" rx="2" fill="#dcdcdc"/><circle cx="12.5" cy="21.5" r="2.6" fill="#535353"/></svg><svg style="left:3314px;top:1491.5px;" width="26" height="18" viewBox="0 0 26 18"><path d="M1 9 Q13 -3 25 9 Q13 21 1 9Z" fill="#dcdcdc"/><circle cx="13" cy="9" r="5.6" fill="#535353"/><circle cx="13" cy="9" r="3.6" fill="#dcdcdc"/><circle cx="13" cy="6.8" r="1.2" fill="#535353"/></svg><svg style="left:3314px;top:1568.5px;" width="26" height="18" viewBox="0 0 26 18"><path d="M1 9 Q13 -3 25 9 Q13 21 1 9Z" fill="#dcdcdc"/><circle cx="13" cy="9" r="5.6" fill="#535353"/><circle cx="13" cy="9" r="3.6" fill="#dcdcdc"/><circle cx="13" cy="6.8" r="1.2" fill="#535353"/></svg><svg style="left:3314px;top:1645.5px;" width="26" height="18" viewBox="0 0 26 18"><path d="M1 9 Q13 -3 25 9 Q13 21 1 9Z" fill="#dcdcdc"/><circle cx="13" cy="9" r="5.6" fill="#535353"/><circle cx="13" cy="9" r="3.6" fill="#dcdcdc"/><circle cx="13" cy="6.8" r="1.2" fill="#535353"/></svg><svg style="left:3314px;top:1722.5px;" width="26" height="18" viewBox="0 0 26 18"><path d="M1 9 Q13 -3 25 9 Q13 21 1 9Z" fill="#dcdcdc"/><circle cx="13" cy="9" r="5.6" fill="#535353"/><circle cx="13" cy="9" r="3.6" fill="#dcdcdc"/><circle cx="13" cy="6.8" r="1.2" fill="#535353"/></svg><svg style="left:3314px;top:1797.5px;" width="23" height="22" viewBox="0 0 23 22"><rect x="1" y="1" width="21" height="20" fill="none" stroke="#454545" stroke-width="2"/></svg><svg style="left:3314px;top:1876.5px;" width="26" height="18" viewBox="0 0 26 18"><path d="M1 9 Q13 -3 25 9 Q13 21 1 9Z" fill="#dcdcdc"/><circle cx="13" cy="9" r="5.6" fill="#535353"/><circle cx="13" cy="9" r="3.6" fill="#dcdcdc"/><circle cx="13" cy="6.8" r="1.2" fill="#535353"/></svg><svg style="left:3314px;top:1953.5px;" width="26" height="18" viewBox="0 0 26 18"><path d="M1 9 Q13 -3 25 9 Q13 21 1 9Z" fill="#dcdcdc"/><circle cx="13" cy="9" r="5.6" fill="#535353"/><circle cx="13" cy="9" r="3.6" fill="#dcdcdc"/><circle cx="13" cy="6.8" r="1.2" fill="#535353"/></svg><div style="left:3362px;top:1471px;width:60px;height:60px;background:#1e1e1e;"></div><svg style="left:3363px;top:1472px;" width="58" height="58" viewBox="0 0 58 58"><rect width="58" height="58" fill="#fff"/><path d="M20 6 H38 L52 51 H37 L35 44 H23 L21 51 H6 Z M29 22 L26 34 H32Z" fill="#666" fill-opacity="0.75"/><path d="M20 6 H38 L52 51 H37 L35 44 H23 L21 51 H6 Z M29 22 L26 34 H32Z" fill="none" stroke="#222" stroke-width="1.2" stroke-dasharray="2 2"/></svg><div style="left:3362px;top:1548px;width:60px;height:60px;background:#1e1e1e;"></div><svg style="left:3363px;top:1549px;" width="58" height="58" viewBox="0 0 58 58"><rect width="58" height="58" fill="#fff"/><defs><filter id="bl1"><feGaussianBlur stdDeviation="2.5"/></filter></defs><path d="M20 6 H38 L52 51 H37 L35 44 H23 L21 51 H6 Z M29 22 L26 34 H32Z" fill="#777" filter="url(#bl1)"/></svg><div style="left:3362px;top:1625px;width:60px;height:60px;background:#1e1e1e;"></div><svg style="left:3363px;top:1626px;" width="58" height="58" viewBox="0 0 58 58"><rect width="58" height="58" fill="#fff"/><defs><pattern id="ck2" width="8" height="8" patternUnits="userSpaceOnUse"><rect width="4" height="4" fill="#cfcfcf"/><rect x="4" y="4" width="4" height="4" fill="#cfcfcf"/></pattern></defs><rect width="58" height="58" fill="url(#ck2)"/><defs><filter id="bl2"><feGaussianBlur stdDeviation="2.5"/></filter></defs><path d="M20 6 H38 L52 51 H37 L35 44 H23 L21 51 H6 Z M29 22 L26 34 H32Z" fill="#7a7a7a" filter="url(#bl2)"/></svg><div style="left:3362px;top:1702px;width:60px;height:60px;background:#1e1e1e;"></div><svg style="left:3363px;top:1703px;" width="58" height="58" viewBox="0 0 58 58"><rect width="58" height="58" fill="#fff"/></svg><div style="left:3362px;top:1779px;width:60px;height:60px;background:#1e1e1e;"></div><svg style="left:3363px;top:1780px;" width="58" height="58" viewBox="0 0 58 58"><rect width="58" height="58" fill="#fff"/><defs><pattern id="ck4" width="8" height="8" patternUnits="userSpaceOnUse"><rect width="4" height="4" fill="#cfcfcf"/><rect x="4" y="4" width="4" height="4" fill="#cfcfcf"/></pattern></defs><rect width="58" height="58" fill="url(#ck4)"/><path d="M19 6 H39 L53 52 H37 L35 45 H23 L21 52 H5 Z M29 26 L26 36 H32Z" fill="#000"/></svg><div style="left:3362px;top:1856px;width:60px;height:60px;background:#1e1e1e;"></div><svg style="left:3363px;top:1857px;" width="58" height="58" viewBox="0 0 58 58"><rect width="58" height="58" fill="#fff"/></svg><div style="left:3362px;top:1933px;width:60px;height:60px;background:#1e1e1e;"></div><svg style="left:3363px;top:1934px;" width="58" height="58" viewBox="0 0 58 58"><rect width="58" height="58" fill="#fff"/></svg><svg style="left:3355px;top:1465px;" width="74" height="70" viewBox="0 0 74 70"><path d="M1.5 20 V1.5 H24 M50 1.5 H72.5 V20 M72.5 50 V68.5 H50 M24 68.5 H1.5 V50" fill="none" stroke="#fff" stroke-width="2.4"/></svg><svg style="left:3758px;top:1950px;" width="21" height="23" viewBox="0 0 21 23"><path d="M5 10 V7 A5.5 5.5 0 0 1 16 7 V10" fill="none" stroke="#dcdcdc" stroke-width="2"/><rect x="1.5" y="10" width="18" height="12" rx="1.5" fill="none" stroke="#dcdcdc" stroke-width="2"/><circle cx="10.5" cy="16" r="2" fill="#dcdcdc"/></svg><svg style="left:3396px;top:2124px;" width="32" height="22" viewBox="0 0 32 22"><rect x="2" y="5" width="16" height="12" rx="6" fill="none" stroke="#8a8a8a" stroke-width="2.6"/><rect x="14" y="5" width="16" height="12" rx="6" fill="none" stroke="#8a8a8a" stroke-width="2.6"/><line x1="9" y1="11" x2="23" y2="11" stroke="#8a8a8a" stroke-width="2.6"/></svg><span style="left:3459px;top:2120px;font-size:30px;line-height:30px;color:#dcdcdc;font-style:italic;font-family:'Liberation Serif',serif">fx</span><svg style="left:3488px;top:2141px;" width="8" height="6" viewBox="0 0 8 6"><path d="M0 0 H8 L4 5Z" fill="#dcdcdc"/></svg><svg style="left:3517px;top:2123px;" width="29" height="25" viewBox="0 0 29 25"><rect x="0" y="0" width="29" height="25" rx="2" fill="#dcdcdc"/><circle cx="14.5" cy="12.5" r="7" fill="#535353"/></svg><svg style="left:3577px;top:2123px;" width="25" height="25" viewBox="0 0 25 25"><circle cx="12.5" cy="12.5" r="10.5" fill="none" stroke="#dcdcdc" stroke-width="2.4"/><path d="M20 5 A10.5 10.5 0 0 1 5 20Z" fill="#dcdcdc"/></svg><svg style="left:3597px;top:2141px;" width="8" height="6" viewBox="0 0 8 6"><path d="M0 0 H8 L4 5Z" fill="#dcdcdc"/></svg><svg style="left:3634px;top:2124.5px;" width="28" height="23" viewBox="0 0 28 23"><path d="M2 1 H10 Q11 1 11.5 2.5 H26 Q27 2.5 27 4.5 V21 Q27 22 26 22 H2 Q1 22 1 21 V3Q1 1 2 1Z" fill="#dcdcdc"/><rect x="1" y="4" width="10" height="1.3" fill="#535353"/></svg><svg style="left:3694px;top:2123px;" width="25" height="25" viewBox="0 0 25 25"><rect x="1.2" y="1.2" width="22.6" height="22.6" fill="none" stroke="#dcdcdc" stroke-width="2.4"/><path d="M12.5 6.5 V18.5 M6.5 12.5 H18.5" stroke="#dcdcdc" stroke-width="2.2"/></svg><svg style="left:3752px;top:2121px;" width="25" height="27" viewBox="0 0 25 27"><rect x="0" y="4" width="25" height="2.4" fill="#dcdcdc"/><rect x="8" y="0" width="8" height="2.4" fill="#dcdcdc"/><path d="M3 7 V25 H22 V7" fill="none" stroke="#dcdcdc" stroke-width="2.4"/><path d="M8.5 10 V23 M12 10 V23 M15.5 10 V23" stroke="#dcdcdc" stroke-width="2"/></svg><svg style="left:3540px;top:1870px;" width="220" height="220" viewBox="0 0 220 220"><defs><radialGradient id="lg" cx="0.5" cy="0.5" r="0.5"><stop offset="0.85" stop-color="#fdfdfd"/><stop offset="1" stop-color="#e4e4e4"/></radialGradient></defs><circle cx="110" cy="110" r="102" fill="url(#lg)"/><path d="M82.3 76.2 L60.6 108.7 L87.5 143.7 H134.2 L160.2 108.7 L137.4 76.2 L110.2 111.9 Z" fill="#cc0000"/></svg><svg style="left:1736px;top:1288px;" width="36" height="36" viewBox="0 0 36 36"><circle cx="13" cy="13" r="10" fill="#eee" stroke="#111" stroke-width="3"/><path d="M8 13 H18" stroke="#111" stroke-width="2.6"/><line x1="20" y1="20" x2="31" y2="31" stroke="#111" stroke-width="4" stroke-linecap="round"/><line x1="20" y1="20" x2="30" y2="30" stroke="#ddd" stroke-width="1.4"/></svg><svg style="left:524px;top:2131px;" width="12" height="24" viewBox="0 0 12 24"><path d="M2 2 L10 12 L2 22" fill="none" stroke="#d8d8d8" stroke-width="1.8"/></svg><span class="t" id="t1" style="left:107.0px;top:9.5px;font-size:26px;line-height:26px;color:#fff;font-weight:bold;letter-spacing:-0.363px;">Photoshop</span><span class="t" id="t2" style="left:275.8px;top:9.5px;font-size:26px;line-height:26px;color:#fff;letter-spacing:-0.302px;">File</span><span class="t" id="t3" style="left:354.3px;top:9.5px;font-size:26px;line-height:26px;color:#fff;letter-spacing:0.097px;">Edit</span><span class="t" id="t4" style="left:436.3px;top:9.5px;font-size:26px;line-height:26px;color:#fff;letter-spacing:-0.253px;">Image</span><span class="t" id="t5" style="left:544.0px;top:9.5px;font-size:26px;line-height:26px;color:#fff;letter-spacing:-0.409px;">Layer</span><span class="t" id="t6" style="left:645.0px;top:9.5px;font-size:26px;line-height:26px;color:#fff;letter-spacing:0.056px;">Type</span><span class="t" id="t7" style="left:738.9px;top:9.5px;font-size:26px;line-height:26px;color:#fff;letter-spacing:0.139px;">Select</span><span class="t" id="t8" style="left:849.7px;top:9.5px;font-size:26px;line-height:26px;color:#fff;letter-spacing:0.053px;">Filter</span><span class="t" id="t9" style="left:945.6px;top:9.5px;font-size:26px;line-height:26px;color:#fff;letter-spacing:0.275px;">3D</span><span class="t" id="t10" style="left:1017.0px;top:9.5px;font-size:26px;line-height:26px;color:#fff;letter-spacing:-0.023px;">View</span><span class="t" id="t11" style="left:1110.6px;top:9.5px;font-size:26px;line-height:26px;color:#fff;letter-spacing:-0.181px;">Window</span><span class="t" id="t12" style="left:1239.0px;top:9.5px;font-size:26px;line-height:26px;color:#fff;letter-spacing:0.129px;">Help</span><span class="t" id="t13" style="left:1776.0px;top:57.5px;font-size:26px;line-height:26px;color:#d8d8d8;font-weight:bold;letter-spacing:-0.146px;">Adobe Photoshop 2020</span><span class="t" id="t14" style="left:393.3px;top:117.5px;font-size:23px;line-height:23px;color:#e6e6e6;letter-spacing:0.261px;">Resize Windows to Fit</span><span class="t" id="t15" style="left:695.0px;top:117.5px;font-size:23px;line-height:23px;color:#e6e6e6;letter-spacing:0.489px;">Zoom All Windows</span><span class="t" id="t16" style="left:961.0px;top:117.5px;font-size:23px;line-height:23px;color:#e6e6e6;letter-spacing:0.536px;">Scrubby Zoom</span><span class="t" id="t17" style="left:1157.4px;top:117.5px;font-size:23px;line-height:23px;color:#e6e6e6;letter-spacing:0.393px;">100%</span><span class="t" id="t18" style="left:1276.0px;top:117.5px;font-size:23px;line-height:23px;color:#e6e6e6;letter-spacing:0.287px;">Fit Screen</span><span class="t" id="t19" style="left:1441.0px;top:117.5px;font-size:23px;line-height:23px;color:#e6e6e6;letter-spacing:0.249px;">Fill Screen</span><span class="t" id="t20" style="left:134.0px;top:179.3px;font-size:23px;line-height:23px;color:#b4b4b4;font-weight:bold;letter-spacing:0.887px;">Untitled-1 @ 181% (Layer 2, RGB/8) *</span><span class="t" id="t21" style="left:630.6px;top:179.3px;font-size:23px;line-height:23px;color:#b4b4b4;font-weight:bold;letter-spacing:1.031px;">Untitled-2 @ 115% (RGB/8) *</span><span class="t" id="t22" style="left:1030.7px;top:179.3px;font-size:23px;line-height:23px;color:#f2f2f2;font-weight:bold;letter-spacing:0.814px;">Untitled-3 @ 297% (Layer 2 copy 2, RGB/8) *</span><span class="t" id="t23" style="left:2749.7px;top:204.4px;font-size:22px;line-height:22px;color:#b8b8b8;font-weight:bold;letter-spacing:0.343px;">History</span><span class="t" id="t24" style="left:2861.5px;top:204.4px;font-size:22px;line-height:22px;color:#f2f2f2;font-weight:bold;letter-spacing:-0.112px;">Actions</span><span class="t" id="t25" style="left:2893.8px;top:260.2px;font-size:23px;line-height:23px;color:#e8e8e8;letter-spacing:0.585px;">Default Actions</span><span class="t" id="t26" style="left:2893.8px;top:304.1px;font-size:23px;line-height:23px;color:#e8e8e8;">Set 1</span><span class="t" id="t27" style="left:2893.8px;top:347.3px;font-size:23px;line-height:23px;color:#e8e8e8;">Acciones</span><span class="t" id="t28" style="left:2880.0px;top:390.1px;font-size:23px;line-height:23px;color:#e8e8e8;letter-spacing:0.292px;">Coral_oattern_01</span><span class="t" id="t29" style="left:2893.8px;top:432.9px;font-size:23px;line-height:23px;color:#e8e8e8;">User</span><span class="t" id="t30" style="left:2880.0px;top:476.0px;font-size:23px;line-height:23px;color:#f4f4f4;letter-spacing:0.373px;">Coral_pattern_01</span><span class="t" id="t31" style="left:3314.8px;top:202.4px;font-size:22px;line-height:22px;color:#b8b8b8;font-weight:bold;letter-spacing:0.149px;">Color</span><span class="t" id="t32" style="left:3403.0px;top:202.4px;font-size:22px;line-height:22px;color:#f2f2f2;font-weight:bold;letter-spacing:-0.312px;">Swatches</span><span class="t" id="t33" style="left:3534.0px;top:202.4px;font-size:22px;line-height:22px;color:#b8b8b8;font-weight:bold;letter-spacing:0.144px;">Gradients</span><span class="t" id="t34" style="left:3669.6px;top:202.4px;font-size:22px;line-height:22px;color:#b8b8b8;font-weight:bold;letter-spacing:0.107px;">Patterns</span><span class="t" id="t35" style="left:3379.2px;top:326.2px;font-size:23px;line-height:23px;color:#e8e8e8;letter-spacing:-0.948px;">RGB</span><span class="t" id="t36" style="left:3379.2px;top:380.5px;font-size:23px;line-height:23px;color:#e8e8e8;letter-spacing:-0.113px;">CMYK</span><span class="t" id="t37" style="left:3379.2px;top:434.8px;font-size:23px;line-height:23px;color:#e8e8e8;letter-spacing:0.161px;">Grayscale</span><span class="t" id="t38" style="left:3379.2px;top:489.1px;font-size:23px;line-height:23px;color:#e8e8e8;letter-spacing:0.244px;">Pastel</span><span class="t" id="t39" style="left:3379.2px;top:543.4px;font-size:23px;line-height:23px;color:#e8e8e8;letter-spacing:0.825px;">Light</span><span class="t" id="t40" style="left:3379.2px;top:597.7px;font-size:23px;line-height:23px;color:#e8e8e8;letter-spacing:0.352px;">Pure</span><span class="t" id="t41" style="left:3315.0px;top:713.4px;font-size:22px;line-height:22px;color:#b8b8b8;font-weight:bold;letter-spacing:0.117px;">Properties</span><span class="t" id="t42" style="left:3459.4px;top:713.4px;font-size:22px;line-height:22px;color:#f2f2f2;font-weight:bold;letter-spacing:0.195px;">Adjustments</span><span class="t" id="t43" style="left:3314.0px;top:780.9px;font-size:23px;line-height:23px;color:#dcdcdc;letter-spacing:0.412px;">Add an adjustment</span><span class="t" id="t44" style="left:3315.6px;top:1243.0px;font-size:22px;line-height:22px;color:#f2f2f2;font-weight:bold;letter-spacing:-0.276px;">Layers</span><span class="t" id="t45" style="left:3418.0px;top:1243.0px;font-size:22px;line-height:22px;color:#b8b8b8;font-weight:bold;letter-spacing:-0.129px;">Channels</span><span class="t" id="t46" style="left:3551.5px;top:1243.0px;font-size:22px;line-height:22px;color:#b8b8b8;font-weight:bold;letter-spacing:-0.284px;">Paths</span><span class="t" id="t47" style="left:3346.0px;top:1307.5px;font-size:24px;line-height:24px;color:#e8e8e8;letter-spacing:-0.437px;">Kind</span><span class="t" id="t48" style="left:3319.5px;top:1364.1px;font-size:24px;line-height:24px;color:#e8e8e8;letter-spacing:-0.224px;">Normal</span><span class="t" id="t49" style="left:3564.0px;top:1364.1px;font-size:24px;line-height:24px;color:#c8c8c8;letter-spacing:0.096px;">Opacity:</span><span class="t" id="t50" style="left:3663.6px;top:1364.1px;font-size:24px;line-height:24px;color:#f0f0f0;letter-spacing:-0.423px;">100%</span><span class="t" id="t51" style="left:3308.0px;top:1419.7px;font-size:24px;line-height:24px;color:#c8c8c8;letter-spacing:-0.155px;">Lock:</span><span class="t" id="t52" style="left:3616.7px;top:1419.7px;font-size:24px;line-height:24px;color:#c8c8c8;letter-spacing:-0.246px;">Fill:</span><span class="t" id="t53" style="left:3663.6px;top:1419.7px;font-size:24px;line-height:24px;color:#f0f0f0;letter-spacing:-0.423px;">100%</span><span class="t" id="t54" style="left:3437.3px;top:1491.3px;font-size:23px;line-height:23px;color:#e8e8e8;letter-spacing:0.345px;">Layer 2 copy 2</span><span class="t" id="t55" style="left:3437.3px;top:1568.2px;font-size:23px;line-height:23px;color:#e8e8e8;letter-spacing:0.400px;">Layer 2 copy</span><span class="t" id="t56" style="left:3437.3px;top:1644.0px;font-size:23px;line-height:23px;color:#e8e8e8;letter-spacing:0.240px;">Layer 2</span><span class="t" id="t57" style="left:3437.3px;top:1721.7px;font-size:23px;line-height:23px;color:#e8e8e8;letter-spacing:0.441px;">Background copy 2</span><span class="t" id="t58" style="left:3437.3px;top:1798.5px;font-size:23px;line-height:23px;color:#e8e8e8;letter-spacing:-0.288px;">Layer 1</span><span class="t" id="t59" style="left:3437.3px;top:1874.8px;font-size:23px;line-height:23px;color:#e8e8e8;">Background copy</span><span class="t" id="t60" style="left:3437.3px;top:1951.1px;font-size:23px;line-height:23px;color:#e8e8e8;">Background</span><span class="t" id="t61" style="left:95.0px;top:2132.9px;font-size:23px;line-height:23px;color:#ececec;letter-spacing:1.170px;">284,33%</span><span class="t" id="t62" style="left:257.8px;top:2132.9px;font-size:23px;line-height:23px;color:#d4d4d4;letter-spacing:0.547px;">Doc: 732,4K/3,34M</span></body></html>
